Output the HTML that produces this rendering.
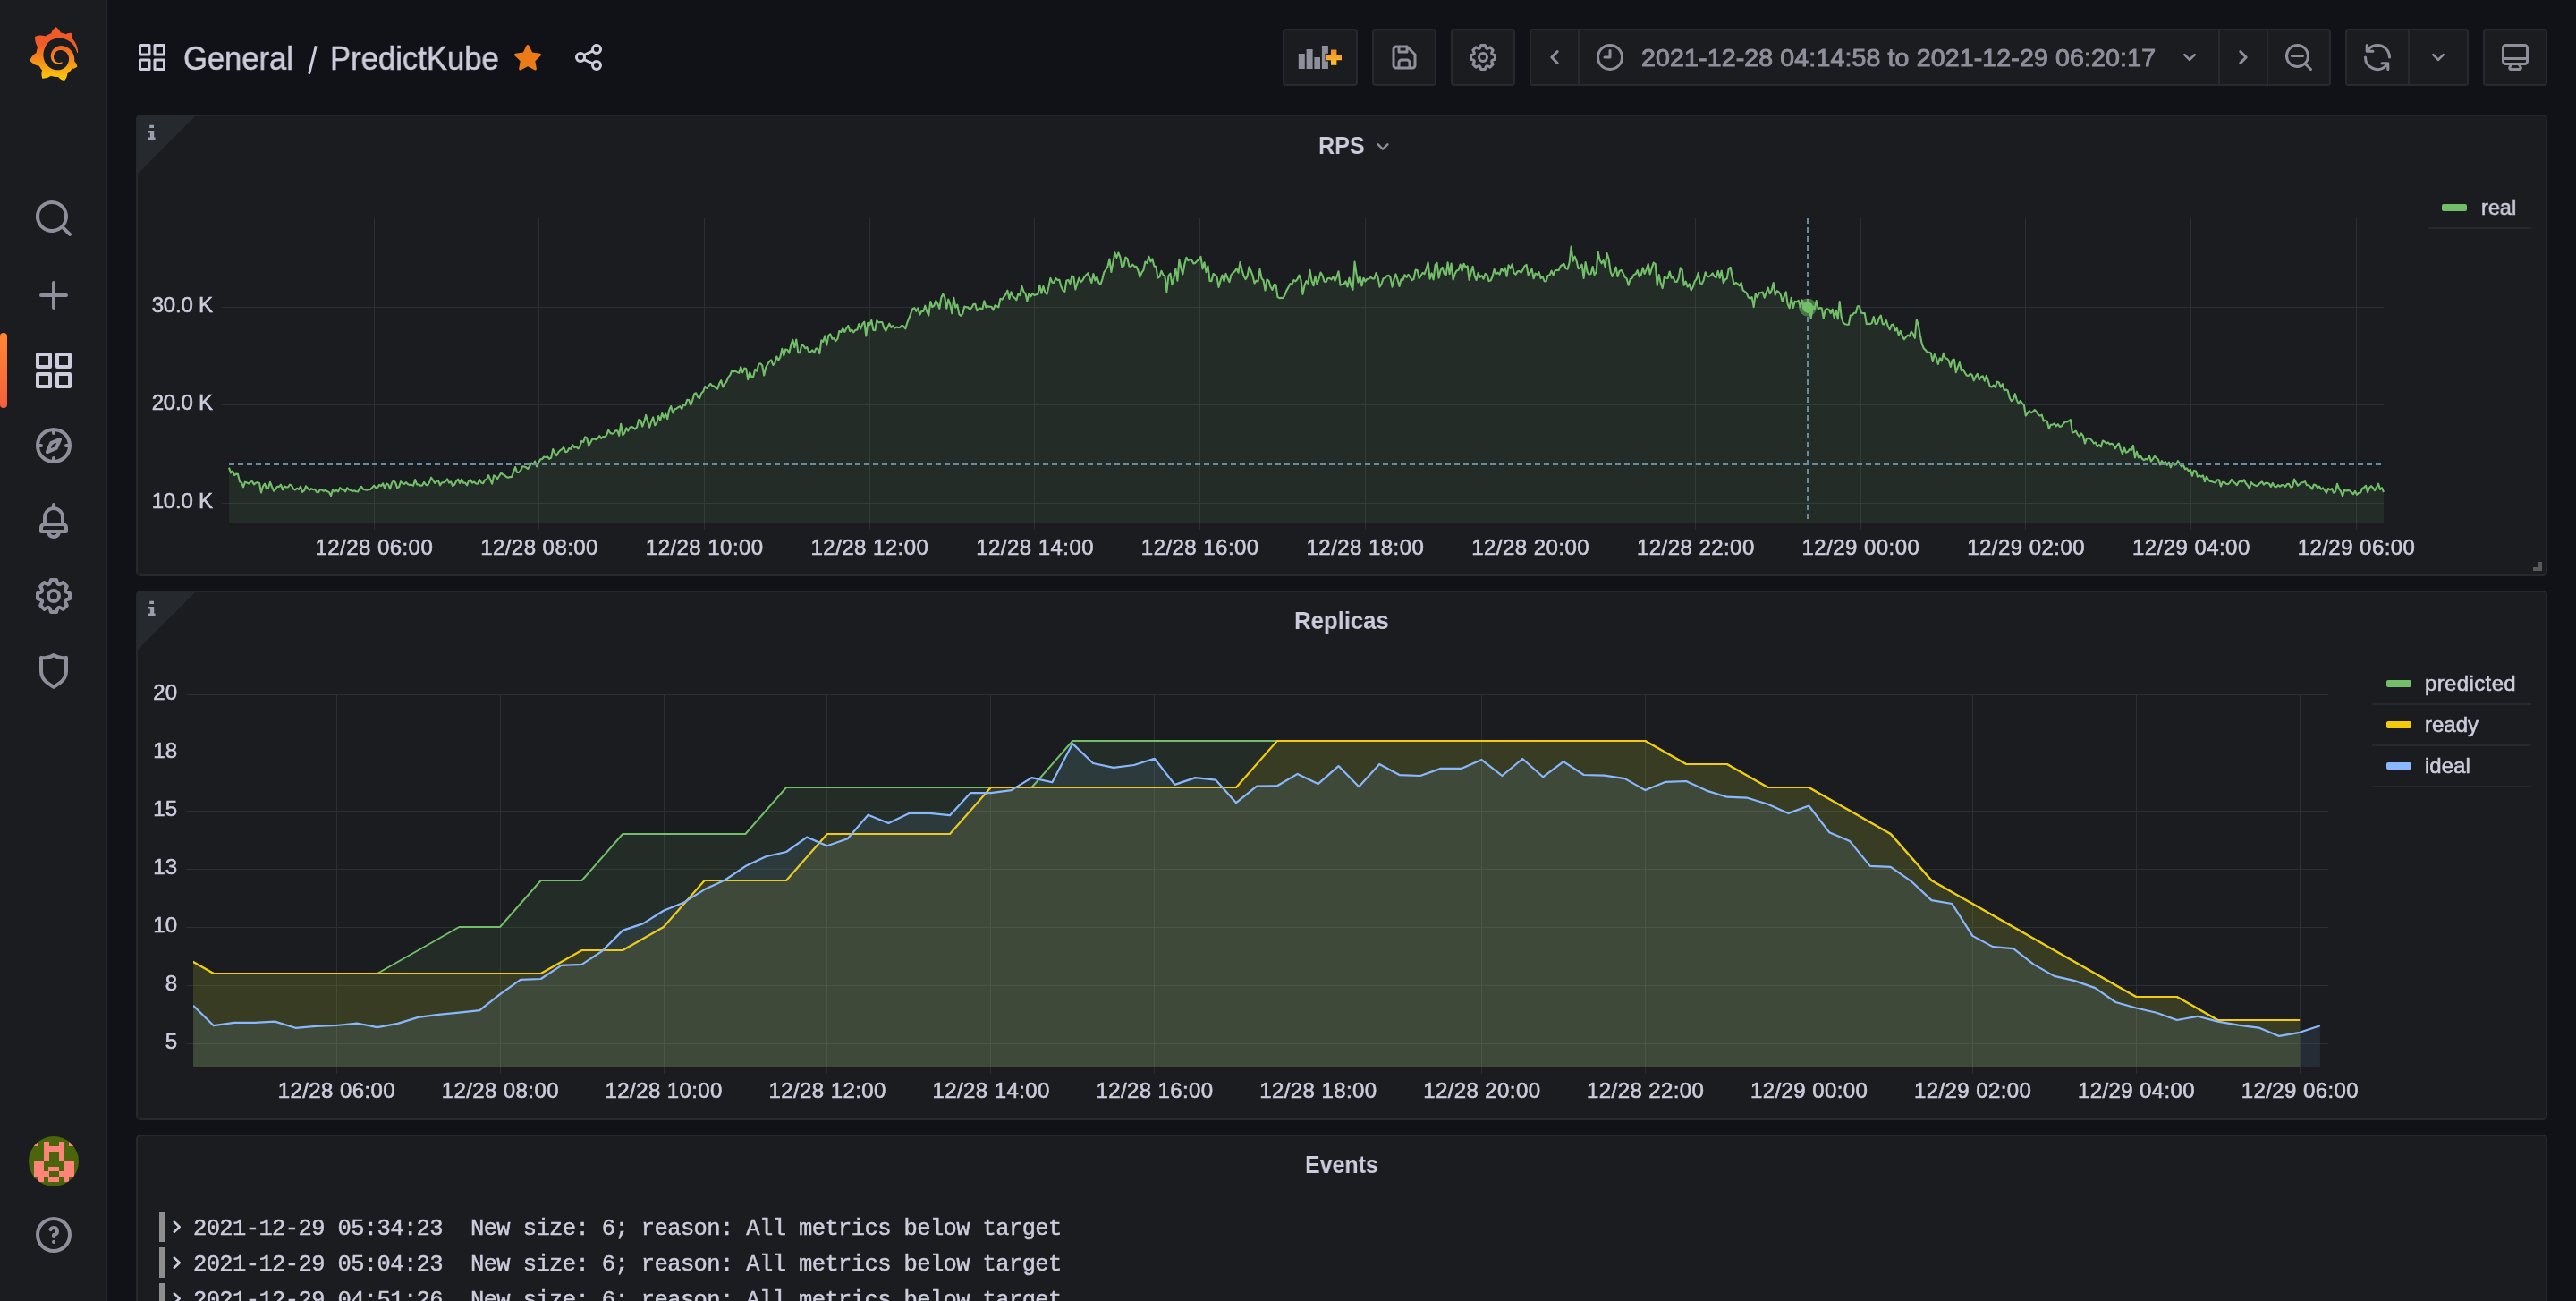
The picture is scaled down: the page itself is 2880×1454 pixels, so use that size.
<!DOCTYPE html>
<html lang="en"><head><meta charset="utf-8"><title>PredictKube - Grafana</title>
<style>
html,body{margin:0;padding:0;background:#111217;}
body{width:2880px;height:1454px;overflow:hidden;position:relative;font-family:"Liberation Sans",sans-serif;color:#ccccdc;}
.t{position:absolute;white-space:pre;margin:0;padding:0;will-change:transform;}
.ic{position:absolute;display:block;will-change:transform;}
.abs{position:absolute;}
.mono{font-family:"Liberation Mono",monospace;}
.side{position:absolute;left:0;top:0;width:118px;height:1454px;background:#1a1c20;border-right:2px solid #26282d;}
.btn{position:absolute;top:32px;height:60px;background:#1a1c20;border:2px solid #28292f;border-radius:4px;box-sizing:content-box;}
.sep{position:absolute;top:34px;width:2px;height:60px;background:#28292f;}
.panel{position:absolute;left:152px;width:2692px;background:#1a1c20;border:2px solid #26282d;border-radius:5px;}
.corner{position:absolute;left:0;top:0;width:0;height:0;border-left:64px solid #262a2f;border-bottom:64px solid transparent;border-top-left-radius:2px;}
.lsw{position:absolute;width:28px;height:8px;border-radius:2px;}
.lsep{position:absolute;height:2px;background:#26282d;}
.bar{position:absolute;left:178px;width:6px;height:34px;background:#8e8e8e;}
</style></head><body>

<div class="side"></div>
<svg class="ic" style="left:31.6px;top:29.6px" width="56.400" height="60.3" viewBox="0 0 351 365" preserveAspectRatio="none"><defs><linearGradient id="lg" gradientUnits="userSpaceOnUse" x1="175.5" y1="445.4948" x2="175.5" y2="114.0346"><stop offset="0" stop-color="#FFF100"/><stop offset="1" stop-color="#F05A28"/></linearGradient></defs><path fill="url(#lg)" d="M342,161.2c-0.6-6.1-1.6-13.1-3.6-20.9c-2-7.7-5-16.2-9.4-25c-4.400-8.800-10.100-17.900-17.500-26.800c-2.900-3.500-6.100-6.900-9.500-10.200c5.100-20.300-6.200-37.900-6.200-37.900c-19.500-1.200-31.900,6.100-36.500,9.400c-0.800-0.300-1.500-0.700-2.300-1c-3.300-1.300-6.700-2.600-10.300-3.700c-3.500-1.100-7.100-2.100-10.800-3c-3.700-0.900-7.400-1.600-11.200-2.200c-0.700-0.100-1.300-0.200-2-0.300c-8.500-27.200-32.900-38.600-32.900-38.600c-27.300,17.300-32.400,41.500-32.400,41.500s-0.100,0.500-0.300,1.400c-1.500,0.400-3,0.900-4.500,1.300c-2.100,0.600-4.200,1.400-6.200,2.200c-2.100,0.800-4.100,1.600-6.200,2.500c-4.100,1.800-8.200,3.800-12.200,6c-3.900,2.200-7.700,4.600-11.400,7.100c-0.500-0.200-1-0.400-1-0.400c-37.800-14.400-71.300,2.900-71.300,2.900c-3.100,40.200,15.100,65.500,18.700,70.100c-0.900,2.500-1.700,5-2.500,7.500c-2.800,9.100-4.900,18.400-6.200,28.100c-0.200,1.400-0.400,2.800-0.500,4.200C18.800,192.700,8.500,228,8.500,228c29.100,33.500,63.100,35.600,63.100,35.600c0,0,0.100-0.100,0.100-0.100c4.300,7.700,9.300,15,14.900,21.900c2.400,2.900,4.800,5.600,7.400,8.300c-10.600,30.400,1.500,55.600,1.500,55.600c32.400,1.200,53.700-14.200,58.200-17.700c3.200,1.100,6.500,2.100,9.800,2.900c10,2.600,20.200,4.100,30.400,4.500c2.500,0.100,5.100,0.200,7.600,0.100l1.200,0l0.800,0l1.600,0l1.600-0.100l0,0.100c15.300,21.800,42.100,24.900,42.100,24.900c19.100-20.100,20.200-40.100,20.200-44.400l0,0c0,0,0-0.100,0-0.300c0-0.400,0-0.600,0-0.600l0,0c0-0.300,0-0.600,0-0.900c4-2.800,7.800-5.800,11.400-9.100c7.600-6.900,14.300-14.800,19.900-23.300c0.500-0.800,1-1.600,1.500-2.400c21.600,1.200,36.900-13.400,36.900-13.400c-3.600-22.500-16.400-33.500-19.100-35.600l0,0c0,0-0.100-0.100-0.300-0.200c-0.200-0.100-0.200-0.200-0.200-0.200c0,0,0,0,0,0c-0.100-0.100-0.300-0.200-0.500-0.300c0.100-1.400,0.200-2.700,0.300-4.100c0.200-2.400,0.200-4.900,0.200-7.300l0-1.800l0-0.900l0-0.500c0-0.600,0-0.400,0-0.600l-0.100-1.500l-0.100-2c0-0.700-0.100-1.300-0.200-1.900c-0.100-0.600-0.100-1.300-0.200-1.900l-0.200-1.900l-0.300-1.900c-0.400-2.500-0.800-4.900-1.400-7.400c-2.300-9.700-6.100-18.900-11-27.200c-5-8.300-11.200-15.600-18.300-21.800c-7-6.200-14.900-11.200-23.100-14.900c-8.300-3.700-16.900-6.100-25.500-7.200c-4.300-0.600-8.600-0.800-12.900-0.700l-1.600,0l-0.400,0c-0.100,0-0.600,0-0.500,0l-0.700,0l-1.600,0.100c-0.600,0-1.200,0.100-1.700,0.100c-2.200,0.200-4.400,0.500-6.500,0.900c-8.600,1.600-16.700,4.700-23.800,9c-7.100,4.300-13.300,9.600-18.300,15.600c-5,6-8.900,12.700-11.600,19.600c-2.700,6.900-4.200,14.100-4.600,21c-0.100,1.700-0.100,3.500-0.100,5.200c0,0.400,0,0.900,0,1.300l0.100,1.400c0.100,0.800,0.100,1.700,0.200,2.500c0.300,3.500,1,6.900,1.900,10.100c1.900,6.500,4.900,12.400,8.600,17.400c3.700,5,8.200,9.100,12.900,12.400c4.700,3.200,9.800,5.500,14.800,7c5,1.500,10,2.100,14.700,2.100c0.600,0,1.200,0,1.700,0c0.300,0,0.600,0,0.900,0c0.300,0,0.600,0,0.900-0.100c0.500,0,1-0.100,1.500-0.100c0.100,0,0.300,0,0.400-0.100l0.500-0.100c0.300,0,0.600-0.100,0.900-0.100c0.600-0.100,1.100-0.200,1.700-0.300c0.600-0.100,1.100-0.200,1.600-0.400c1.100-0.200,2.100-0.600,3.100-0.900c2-0.700,4-1.500,5.700-2.400c1.800-0.900,3.400-2,5-3c0.400-0.300,0.900-0.600,1.300-1c1.600-1.300,1.900-3.700,0.600-5.300c-1.100-1.400-3.100-1.800-4.700-0.900c-0.400,0.200-0.800,0.400-1.200,0.600c-1.400,0.700-2.800,1.300-4.300,1.800c-1.500,0.500-3.100,0.900-4.700,1.200c-0.800,0.100-1.600,0.200-2.500,0.300c-0.400,0-0.800,0.100-1.300,0.100c-0.400,0-0.900,0-1.200,0c-0.400,0-0.800,0-1.200,0c-0.500,0-1,0-1.500-0.100c0,0-0.300,0-0.100,0l-0.200,0l-0.300,0c-0.200,0-0.500,0-0.700-0.100c-0.500-0.100-0.900-0.100-1.400-0.200c-3.700-0.500-7.400-1.600-10.900-3.200c-3.600-1.600-7-3.800-10.100-6.600c-3.100-2.800-5.800-6.100-7.900-9.900c-2.100-3.800-3.600-8-4.300-12.400c-0.300-2.200-0.500-4.500-0.400-6.700c0-0.600,0.100-1.200,0.100-1.800c0,0.200,0-0.100,0-0.100l0-0.200l0-0.500c0-0.300,0.100-0.600,0.100-0.900c0.100-1.200,0.300-2.400,0.500-3.600c1.700-9.600,6.500-19,13.900-26.100c1.900-1.800,3.900-3.400,6-4.900c2.100-1.500,4.400-2.800,6.800-3.900c2.400-1.100,4.800-2,7.400-2.700c2.500-0.700,5.100-1.100,7.800-1.400c1.300-0.100,2.600-0.200,4-0.200c0.400,0,0.600,0,0.900,0l1.100,0l0.700,0c0.300,0,0,0,0.100,0l0.300,0l1.100,0.100c2.900,0.200,5.700,0.600,8.500,1.300c5.600,1.200,11.100,3.300,16.200,6.100c10.200,5.700,18.900,14.500,24.200,25.100c2.700,5.300,4.600,11,5.500,16.900c0.200,1.500,0.400,3,0.500,4.500l0.100,1.100l0.100,1.100c0,0.400,0,0.800,0,1.100c0,0.400,0,0.800,0,1.100l0,1l0,1.100c0,0.700-0.100,1.900-0.100,2.600c-0.100,1.600-0.300,3.300-0.500,4.900c-0.200,1.600-0.500,3.200-0.800,4.800c-0.300,1.600-0.700,3.200-1.100,4.700c-0.800,3.100-1.800,6.200-3,9.300c-2.400,6-5.600,11.800-9.400,17.100c-7.700,10.600-18.200,19.200-30.200,24.700c-6,2.700-12.300,4.700-18.800,5.700c-3.200,0.600-6.500,0.900-9.800,1l-0.600,0l-0.500,0l-1.100,0l-1.600,0l-0.800,0c0.400,0-0.100,0-0.100,0l-0.300,0c-1.800,0-3.500-0.100-5.300-0.300c-7-0.500-13.900-1.800-20.700-3.700c-6.700-1.900-13.200-4.600-19.400-7.800c-12.300-6.600-23.400-15.600-32-26.500c-4.300-5.400-8.100-11.300-11.200-17.400c-3.100-6.100-5.600-12.600-7.400-19.100c-1.800-6.600-2.900-13.300-3.400-20.100l-0.100-1.300l0-0.300l0-0.300l0-0.600l0-1.100l0-0.300l0-0.400l0-0.800l0-1.600l0-0.300c0,0,0,0.100,0-0.100l0-0.600c0-0.800,0-1.700,0-2.500c0.100-3.300,0.400-6.800,0.800-10.200c0.400-3.400,1-6.900,1.700-10.300c0.700-3.400,1.500-6.800,2.500-10.200c1.900-6.700,4.300-13.200,7.100-19.300c5.700-12.200,13.100-23.100,22-31.800c2.200-2.200,4.500-4.200,6.900-6.200c2.400-1.900,4.900-3.700,7.500-5.400c2.500-1.700,5.200-3.200,7.900-4.600c1.300-0.700,2.700-1.400,4.100-2c0.700-0.300,1.400-0.600,2.100-0.900c0.700-0.300,1.400-0.600,2.100-0.900c2.800-1.200,5.700-2.200,8.700-3.100c0.700-0.200,1.500-0.400,2.200-0.700c0.700-0.200,1.500-0.400,2.200-0.600c1.500-0.400,3-0.800,4.500-1.100c0.700-0.200,1.500-0.300,2.300-0.500c0.800-0.200,1.500-0.300,2.300-0.500c0.800-0.100,1.500-0.300,2.300-0.400l1.100-0.200l1.200-0.200c0.800-0.100,1.500-0.200,2.300-0.300c0.900-0.100,1.700-0.200,2.600-0.300c0.700-0.100,1.900-0.200,2.600-0.300c0.500-0.100,1.100-0.100,1.600-0.200l1.100-0.100l0.500-0.100l0.600,0c0.900-0.100,1.700-0.100,2.600-0.200l1.300-0.100c0,0,0.500,0,0.100,0l0.300,0l0.600,0c0.700,0,1.500-0.100,2.200-0.100c2.900-0.100,5.900-0.100,8.800,0c5.800,0.200,11.500,0.900,17,1.900c11.100,2.100,21.500,5.600,31,10.300c9.500,4.600,17.900,10.300,25.300,16.500c0.500,0.400,0.900,0.800,1.400,1.200c0.400,0.400,0.900,0.800,1.300,1.200c0.900,0.800,1.700,1.600,2.600,2.400c0.900,0.800,1.700,1.600,2.500,2.400c0.800,0.800,1.600,1.600,2.400,2.500c3.100,3.300,6,6.600,8.600,10c5.200,6.700,9.400,13.500,12.700,19.900c0.200,0.400,0.400,0.800,0.600,1.200c0.200,0.400,0.400,0.800,0.600,1.200c0.400,0.800,0.800,1.600,1.100,2.400c0.400,0.800,0.700,1.500,1.100,2.300c0.300,0.800,0.700,1.500,1,2.300c1.200,3,2.400,5.900,3.300,8.600c1.500,4.400,2.600,8.300,3.500,11.700c0.300,1.400,1.600,2.300,3,2.100c1.500-0.100,2.600-1.300,2.600-2.800C342.600,170.400,342.500,166.100,342,161.200z"/></svg>
<div class="abs" style="left:0;top:372px;width:8px;height:84px;border-radius:4px;background:linear-gradient(0deg,#f55f3e 0%,#ff8833 100%);"></div>
<svg class="ic" style="left:36.00px;top:220.00px" width="48" height="48" viewBox="0 0 24 24" fill="#8e8f9b" ><path d="M21.71,20.29,18,16.61A9,9,0,1,0,16.61,18l3.68,3.68a1,1,0,0,0,1.42,0A1,1,0,0,0,21.71,20.29ZM11,18a7,7,0,1,1,7-7A7,7,0,0,1,11,18Z"/></svg>
<svg class="ic" style="left:36.00px;top:306.00px" width="48" height="48" viewBox="0 0 24 24" fill="#8e8f9b" ><path d="M19,11H13V5a1,1,0,0,0-2,0v6H5a1,1,0,0,0,0,2h6v6a1,1,0,0,0,2,0V13h6a1,1,0,0,0,0-2Z"/></svg>
<svg class="ic" style="left:36.00px;top:390.00px" width="48" height="48" viewBox="0 0 24 24" fill="#ccccdc" ><path d="M10,13H3a1,1,0,0,0-1,1v7a1,1,0,0,0,1,1h7a1,1,0,0,0,1-1V14A1,1,0,0,0,10,13ZM9,20H4V15H9ZM21,2H14a1,1,0,0,0-1,1v7a1,1,0,0,0,1,1h7a1,1,0,0,0,1-1V3A1,1,0,0,0,21,2ZM20,9H15V4h5Zm1,4H14a1,1,0,0,0-1,1v7a1,1,0,0,0,1,1h7a1,1,0,0,0,1-1V14A1,1,0,0,0,21,13Zm-1,7H15V15h5ZM10,2H3A1,1,0,0,0,2,3v7a1,1,0,0,0,1,1h7a1,1,0,0,0,1-1V3A1,1,0,0,0,10,2ZM9,9H4V4H9Z"/></svg>
<svg class="ic" style="left:36.00px;top:474.00px" width="48" height="48" viewBox="0 0 24 24" fill="#8e8f9b" ><path d="M12,2A10,10,0,1,0,22,12,10,10,0,0,0,12,2Zm1,17.93V19a1,1,0,0,0-2,0v.93A8,8,0,0,1,4.07,13H5a1,1,0,0,0,0-2H4.07A8,8,0,0,1,11,4.07V5a1,1,0,0,0,2,0V4.07A8,8,0,0,1,19.93,11H19a1,1,0,0,0,0,2h.93A8,8,0,0,1,13,19.93ZM15.14,7.55l-5,2.12a1,1,0,0,0-.52.52l-2.12,5a1,1,0,0,0,.21,1.1,1,1,0,0,0,.7.3.93.93,0,0,0,.4-.09l5-2.12a1,1,0,0,0,.52-.52l2.12-5a1,1,0,0,0-1.31-1.31Zm-2.49,5.1-2.28,1,1-2.28,2.28-1Z"/></svg>
<svg class="ic" style="left:36.00px;top:558.00px" width="48" height="48" viewBox="0 0 24 24" fill="#8e8f9b" ><path d="M18,13.18V10a6,6,0,0,0-5-5.91V3a1,1,0,0,0-2,0V4.09A6,6,0,0,0,6,10v3.18A3,3,0,0,0,4,16v2a1,1,0,0,0,1,1H8.14a4,4,0,0,0,7.72,0H19a1,1,0,0,0,1-1V16A3,3,0,0,0,18,13.18ZM8,10a4,4,0,0,1,8,0v3H8Zm4,10a2,2,0,0,1-1.72-1h3.44A2,2,0,0,1,12,20Zm6-3H6V16a1,1,0,0,1,1-1H17a1,1,0,0,1,1,1Z"/></svg>
<svg class="ic" style="left:36.00px;top:642.00px" width="48" height="48" viewBox="0 0 24 24" fill="#8e8f9b" ><path d="M21.32,9.55l-1.89-.63.89-1.78A1,1,0,0,0,20.13,6L18,3.87a1,1,0,0,0-1.15-.19l-1.78.89-.63-1.89A1,1,0,0,0,13.5,2h-3a1,1,0,0,0-.95.68L8.920,4.57,7.14,3.68A1,1,0,0,0,6,3.87L3.87,6a1,1,0,0,0-.19,1.15l.89,1.780-1.89.63A1,1,0,0,0,2,10.5v3a1,1,0,0,0,.68.95l1.89.63-.89,1.78A1,1,0,0,0,3.87,18L6,20.13a1,1,0,0,0,1.15.19l1.78-.89.63,1.89a1,1,0,0,0,.95.68h3a1,1,0,0,0,.95-.68l.63-1.89,1.78.89A1,1,0,0,0,18,20.13L20.13,18a1,1,0,0,0,.19-1.15l-.89-1.78,1.89-.63A1,1,0,0,0,22,13.5v-3A1,1,0,0,0,21.32,9.55ZM20,12.78l-1.2.4A2,2,0,0,0,17.64,16l.57,1.14-1.1,1.1L16,17.64a2,2,0,0,0-2.79,1.16l-.4,1.2H11.220l-.4-1.2A2,2,0,0,0,8,17.64l-1.14.57-1.1-1.1L6.36,16A2,2,0,0,0,5.2,13.18L4,12.78V11.220l1.2-.4A2,2,0,0,0,6.36,8L5.79,6.89l1.1-1.1L8,6.36A2,2,0,0,0,10.82,5.2l.4-1.2h1.56l.4,1.2A2,2,0,0,0,16,6.36l1.140-.57,1.1,1.1L17.64,8a2,2,0,0,0,1.16,2.79l1.2.4ZM12,8a4,4,0,1,0,4,4A4,4,0,0,0,12,8Zm0,6a2,2,0,1,1,2-2A2,2,0,0,1,12,14Z"/></svg>
<svg class="ic" style="left:36.00px;top:726.00px" width="48" height="48" viewBox="0 0 24 24" fill="#8e8f9b" ><path d="M19.63,3.65a1,1,0,0,0-.84-.2,8,8,0,0,1-6.22-1.27,1,1,0,0,0-1.14,0A8,8,0,0,1,5.21,3.45a1,1,0,0,0-.84.2A1,1,0,0,0,4,4.43v7.45a9,9,0,0,0,3.77,7.33l3.65,2.6a1,1,0,0,0,1.16,0l3.65-2.6A9,9,0,0,0,20,11.88V4.43A1,1,0,0,0,19.63,3.65ZM18,11.88a7,7,0,0,1-2.930,5.7L12,19.77,8.930,17.58A7,7,0,0,1,6,11.88V5.58a10,10,0,0,0,6-1.39,10,10,0,0,0,6,1.39Z"/></svg>
<svg class="ic" style="left:36.00px;top:1356.00px" width="48" height="48" viewBox="0 0 24 24" fill="#8e8f9b" ><path d="M11.29,15.29a1.58,1.58,0,0,0-.12.15.76.76,0,0,0-.09.18.64.64,0,0,0-.06.18,1.36,1.36,0,0,0,0,.2.84.84,0,0,0,.08.38.9.9,0,0,0,.54.54.94.94,0,0,0,.76,0,.9.9,0,0,0,.54-.54A1,1,0,0,0,13,16a1,1,0,0,0-.29-.71A1,1,0,0,0,11.29,15.29ZM12,2A10,10,0,1,0,22,12,10,10,0,0,0,12,2Zm0,18a8,8,0,1,1,8-8A8,8,0,0,1,12,20ZM12,7A3,3,0,0,0,9.4,8.5a1,1,0,1,0,1.73,1A1,1,0,0,1,12,9a1,1,0,0,1,0,2,1,1,0,0,0-1,1v1a1,1,0,0,0,2,0v-.18A3,3,0,0,0,12,7Z"/></svg>
<svg class="ic" style="left:32px;top:1270px" width="56" height="56" viewBox="0 0 10 10"><defs><clipPath id="avc"><circle cx="5" cy="5" r="5"/></clipPath></defs><g clip-path="url(#avc)" shape-rendering="crispEdges"><rect width="10" height="10" fill="#4a650b"/><rect x="1" y="1" width="1.02" height="1.02" fill="#fe8378"/><rect x="3" y="1" width="1.02" height="1.02" fill="#fe8378"/><rect x="6" y="1" width="1.02" height="1.02" fill="#fe8378"/><rect x="8" y="1" width="1.02" height="1.02" fill="#fe8378"/><rect x="3" y="2" width="1.02" height="1.02" fill="#fe8378"/><rect x="4" y="2" width="1.02" height="1.02" fill="#fe8378"/><rect x="5" y="2" width="1.02" height="1.02" fill="#fe8378"/><rect x="6" y="2" width="1.02" height="1.02" fill="#fe8378"/><rect x="3" y="3" width="1.02" height="1.02" fill="#fe8378"/><rect x="6" y="3" width="1.02" height="1.02" fill="#fe8378"/><rect x="3" y="4" width="1.02" height="1.02" fill="#fe8378"/><rect x="6" y="4" width="1.02" height="1.02" fill="#fe8378"/><rect x="1" y="5" width="1.02" height="1.02" fill="#fe8378"/><rect x="2" y="5" width="1.02" height="1.02" fill="#fe8378"/><rect x="7" y="5" width="1.02" height="1.02" fill="#fe8378"/><rect x="8" y="5" width="1.02" height="1.02" fill="#fe8378"/><rect x="1" y="6" width="1.02" height="1.02" fill="#fe8378"/><rect x="2" y="6" width="1.02" height="1.02" fill="#fe8378"/><rect x="4" y="6" width="1.02" height="1.02" fill="#fe8378"/><rect x="5" y="6" width="1.02" height="1.02" fill="#fe8378"/><rect x="7" y="6" width="1.02" height="1.02" fill="#fe8378"/><rect x="8" y="6" width="1.02" height="1.02" fill="#fe8378"/><rect x="1" y="7" width="1.02" height="1.02" fill="#fe8378"/><rect x="2" y="7" width="1.02" height="1.02" fill="#fe8378"/><rect x="3" y="7" width="1.02" height="1.02" fill="#fe8378"/><rect x="6" y="7" width="1.02" height="1.02" fill="#fe8378"/><rect x="7" y="7" width="1.02" height="1.02" fill="#fe8378"/><rect x="8" y="7" width="1.02" height="1.02" fill="#fe8378"/><rect x="2" y="8" width="1.02" height="1.02" fill="#fe8378"/><rect x="4" y="8" width="1.02" height="1.02" fill="#fe8378"/><rect x="5" y="8" width="1.02" height="1.02" fill="#fe8378"/><rect x="7" y="8" width="1.02" height="1.02" fill="#fe8378"/></g></svg>
<svg class="ic" style="left:152.00px;top:46.00px" width="36" height="36" viewBox="0 0 24 24" fill="#ccccdc" ><path d="M10,13H3a1,1,0,0,0-1,1v7a1,1,0,0,0,1,1h7a1,1,0,0,0,1-1V14A1,1,0,0,0,10,13ZM9,20H4V15H9ZM21,2H14a1,1,0,0,0-1,1v7a1,1,0,0,0,1,1h7a1,1,0,0,0,1-1V3A1,1,0,0,0,21,2ZM20,9H15V4h5Zm1,4H14a1,1,0,0,0-1,1v7a1,1,0,0,0,1,1h7a1,1,0,0,0,1-1V14A1,1,0,0,0,21,13Zm-1,7H15V15h5ZM10,2H3A1,1,0,0,0,2,3v7a1,1,0,0,0,1,1h7a1,1,0,0,0,1-1V3A1,1,0,0,0,10,2ZM9,9H4V4H9Z"/></svg>
<div class="t " style="left:204.80px;top:47.83px;font-size:36px;line-height:36px;color:#ccccdc;transform:scaleX(0.9603);transform-origin:0 0;-webkit-text-stroke:0.5px #ccccdc;">General</div>
<svg class="ic" style="left:340px;top:46px" width="20" height="42" viewBox="340 46 20 42"><path d="M345.600 82.600L353.300 51.400" stroke="#ccccdc" stroke-width="2.900" fill="none"/></svg>
<div class="t " style="left:368.60px;top:47.83px;font-size:36px;line-height:36px;color:#ccccdc;transform:scaleX(0.9626);transform-origin:0 0;-webkit-text-stroke:0.5px #ccccdc;">PredictKube</div>
<svg class="ic" style="left:572.00px;top:46.50px" width="36" height="36" viewBox="0 0 24 24" fill="#eb7b18" ><path d="M17.56,21a1,1,0,0,1-.46-.11L12,18.22l-5.1,2.670a1,1,0,0,1-1.450-1.060l1-5.630-4.120-4a1,1,0,0,1-.250-1,1,1,0,0,1,.810-.680l5.700-.830,2.510-5.130a1,1,0,0,1,1.800,0l2.540,5.120,5.700.830a1,1,0,0,1,.810.680,1,1,0,0,1-.250,1l-4.120,4,1,5.630a1,1,0,0,1-.4,1A1,1,0,0,1,17.560,21Z"/></svg>
<svg class="ic" style="left:640.00px;top:46.00px" width="36" height="36" viewBox="0 0 24 24" fill="#ccccdc" ><path d="M18,14a4,4,0,0,0-3.080,1.480l-5.100-2.350a3.640,3.640,0,0,0,0-2.260l5.100-2.350A4,4,0,1,0,14,6a4.170,4.170,0,0,0,.070.710L8.790,9.140a4,4,0,1,0,0,5.720l5.280,2.430A4.170,4.170,0,0,0,14,18a4,4,0,1,0,4-4ZM18,4a2,2,0,1,1-2,2A2,2,0,0,1,18,4ZM6,14a2,2,0,1,1,2-2A2,2,0,0,1,6,14Zm12,6a2,2,0,1,1,2-2A2,2,0,0,1,18,20Z"/></svg>
<div class="btn" style="left:1434px;width:80px"></div>
<div class="btn" style="left:1534px;width:68px"></div>
<div class="btn" style="left:1622px;width:68px"></div>
<div class="btn" style="left:1710px;width:892px"></div>
<div class="btn" style="left:2622px;width:134px"></div>
<div class="btn" style="left:2776px;width:68px"></div>
<div class="sep" style="left:1764px"></div>
<div class="sep" style="left:2480px"></div>
<div class="sep" style="left:2534px"></div>
<div class="sep" style="left:2692px"></div>
<svg class="ic" style="left:1450px;top:48px" width="52" height="32" viewBox="1450 48 52 32"><defs><linearGradient id="pg" x1="0" y1="0" x2="0" y2="1"><stop offset="0" stop-color="#f0882d"/><stop offset="1" stop-color="#fdc52b"/></linearGradient></defs>
<g fill="#8e8f9b"><rect x="1451.8" y="60" width="7" height="17"/><rect x="1460.6" y="55" width="7" height="22"/><rect x="1469.4" y="64" width="6.6" height="13"/><rect x="1477.9" y="51" width="7" height="26"/></g>
<path d="M1488 55.4h6.4v5.5h5.6v6.4h-5.6v5.5h-6.4v-5.5h-5.4v-6.400h5.400z" fill="url(#pg)" stroke="#1a1c20" stroke-width="2.2" paint-order="stroke"/></svg>
<svg class="ic" style="left:1552.00px;top:46.00px" width="36" height="36" viewBox="0 0 24 24" fill="#8e8f9b" ><path d="M20.71,9.29l-6-6a1,1,0,0,0-.32-.21A1.090,1.090,0,0,0,14,3H6A3,3,0,0,0,3,6V18a3,3,0,0,0,3,3H18a3,3,0,0,0,3-3V10A1,1,0,0,0,20.710,9.290ZM9,5h4V7H9Zm6,14H9V16a1,1,0,0,1,1-1h4a1,1,0,0,1,1,1Zm4-1a1,1,0,0,1-1,1H17V16a3,3,0,0,0-3-3H10a3,3,0,0,0-3,3v3H6a1,1,0,0,1-1-1V6A1,1,0,0,1,6,5H7V8A1,1,0,0,0,8,9h6a1,1,0,0,0,1-1V6.410l4,4Z"/></svg>
<svg class="ic" style="left:1640.00px;top:46.00px" width="36" height="36" viewBox="0 0 24 24" fill="#8e8f9b" ><path d="M21.32,9.55l-1.89-.63.89-1.78A1,1,0,0,0,20.13,6L18,3.87a1,1,0,0,0-1.15-.19l-1.78.89-.63-1.89A1,1,0,0,0,13.5,2h-3a1,1,0,0,0-.95.68L8.920,4.57,7.14,3.68A1,1,0,0,0,6,3.87L3.87,6a1,1,0,0,0-.19,1.15l.89,1.780-1.89.63A1,1,0,0,0,2,10.5v3a1,1,0,0,0,.68.95l1.89.63-.89,1.78A1,1,0,0,0,3.87,18L6,20.13a1,1,0,0,0,1.15.19l1.78-.89.63,1.89a1,1,0,0,0,.95.68h3a1,1,0,0,0,.95-.68l.63-1.89,1.78.89A1,1,0,0,0,18,20.13L20.13,18a1,1,0,0,0,.19-1.15l-.89-1.78,1.89-.63A1,1,0,0,0,22,13.5v-3A1,1,0,0,0,21.32,9.55ZM20,12.78l-1.2.4A2,2,0,0,0,17.64,16l.57,1.14-1.1,1.1L16,17.64a2,2,0,0,0-2.79,1.16l-.4,1.2H11.220l-.4-1.2A2,2,0,0,0,8,17.64l-1.14.57-1.1-1.1L6.36,16A2,2,0,0,0,5.2,13.18L4,12.78V11.220l1.2-.4A2,2,0,0,0,6.36,8L5.79,6.89l1.1-1.1L8,6.36A2,2,0,0,0,10.82,5.2l.4-1.2h1.56l.4,1.2A2,2,0,0,0,16,6.36l1.140-.57,1.1,1.1L17.64,8a2,2,0,0,0,1.16,2.79l1.2.4ZM12,8a4,4,0,1,0,4,4A4,4,0,0,0,12,8Zm0,6a2,2,0,1,1,2-2A2,2,0,0,1,12,14Z"/></svg>
<svg class="ic" style="left:1720.00px;top:46.00px" width="36" height="36" viewBox="0 0 24 24" fill="#8e8f9b" ><path d="M11.29,12l3.54-3.54a1,1,0,0,0,0-1.41,1,1,0,0,0-1.42,0L9.170,11.29a1,1,0,0,0,0,1.42L13.41,17a1,1,0,0,0,.71.29,1,1,0,0,0,.71-.29,1,1,0,0,0,0-1.41Z"/></svg>
<svg class="ic" style="left:1782.00px;top:46.00px" width="36" height="36" viewBox="0 0 24 24" fill="#8e8f9b" ><path d="M12,2A10,10,0,1,0,22,12,10,10,0,0,0,12,2Zm0,18a8,8,0,1,1,8-8A8,8,0,0,1,12,20Zm0-14a1,1,0,0,0-1,1v4H8a1,1,0,0,0,0,2h4a1,1,0,0,0,1-1V7A1,1,0,0,0,12,6Z"/></svg>
<div class="t " style="left:1835.00px;top:49.77px;font-size:28.5px;line-height:28.5px;color:#8e8f9b;letter-spacing:0.149px;-webkit-text-stroke:1.0px #8e8f9b;">2021-12-28 04:14:58 to 2021-12-29 06:20:17</div>
<svg class="ic" style="left:2432.00px;top:48.00px" width="32" height="32" viewBox="0 0 24 24" fill="#8e8f9b" ><path d="M17,9.17a1,1,0,0,0-1.41,0L12,12.71,8.460,9.17a1,1,0,0,0-1.41,0,1,1,0,0,0,0,1.42l4.24,4.24a1,1,0,0,0,1.42,0L17,10.59A1,1,0,0,0,17,9.17Z"/></svg>
<svg class="ic" style="left:2490.00px;top:46.00px" width="36" height="36" viewBox="0 0 24 24" fill="#8e8f9b" ><path d="M14.83,11.29,10.59,7.05a1,1,0,0,0-1.42,0,1,1,0,0,0,0,1.41L12.71,12,9.170,15.54a1,1,0,0,0,0,1.41,1,1,0,0,0,.71.29,1,1,0,0,0,.71-.29l4.24-4.24A1,1,0,0,0,14.830,11.29Z"/></svg>
<svg class="ic" style="left:2552.00px;top:46.00px" width="36" height="36" viewBox="0 0 24 24" fill="#8e8f9b" ><path d="M21.71,20.29,18,16.61A9,9,0,1,0,16.610,18l3.680,3.680a1,1,0,0,0,1.420,0A1,1,0,0,0,21.710,20.290ZM11,18a7,7,0,1,1,7-7A7,7,0,0,1,11,18Zm4-8H7a1,1,0,0,0,0,2h8a1,1,0,0,0,0-2Z"/></svg>
<svg class="ic" style="left:2640.00px;top:46.00px" width="36" height="36" viewBox="0 0 24 24" fill="#8e8f9b" ><path d="M19.91,15.51H15.380a1,1,0,0,0,0,2h2.400A8,8,0,0,1,4,12a1,1,0,0,0-2,0,10,10,0,0,0,16.880,7.230V21a1,1,0,0,0,2,0V16.500A1,1,0,0,0,19.910,15.510ZM12,2A10,10,0,0,0,5.120,4.770V3a1,1,0,0,0-2,0V7.500a1,1,0,0,0,1,1h4.500a1,1,0,0,0,0-2H6.220A8,8,0,0,1,20,12a1,1,0,0,0,2,0A10,10,0,0,0,12,2Z"/></svg>
<svg class="ic" style="left:2710.00px;top:48.00px" width="32" height="32" viewBox="0 0 24 24" fill="#8e8f9b" ><path d="M17,9.17a1,1,0,0,0-1.41,0L12,12.71,8.460,9.17a1,1,0,0,0-1.41,0,1,1,0,0,0,0,1.42l4.24,4.24a1,1,0,0,0,1.42,0L17,10.59A1,1,0,0,0,17,9.17Z"/></svg>
<svg class="ic" style="left:2794.00px;top:46.00px" width="36" height="36" viewBox="0 0 24 24" fill="#8e8f9b" ><path d="M19,2H5A3,3,0,0,0,2,5V15a3,3,0,0,0,3,3H7.640l-.580,1a2,2,0,0,0,0,2,2,2,0,0,0,1.750,1h6.460A2,2,0,0,0,17,21a2,2,0,0,0,0-2l-.590-1H19a3,3,0,0,0,3-3V5A3,3,0,0,0,19,2ZM8.770,20,10,18H14l1.200,2ZM20,15a1,1,0,0,1-1,1H5a1,1,0,0,1-1-1V14H20Zm0-3H4V5A1,1,0,0,1,5,4H19a1,1,0,0,1,1,1Z"/></svg>
<div class="panel" style="top:128px;height:512px"><div class="corner"></div><svg class="ic" style="left:12px;top:8.800px" width="10" height="18" viewBox="0 0 10 18"><path fill="#9d9eab" d="M1.200 0.800h4.800v3.200h-4.800zM0 6.900h6.200v7.700h1.400v2.600h-7.600v-2.600h1.900v-5.200h-1.900z"/></svg></div>
<div class="abs" style="left:2832px;top:628px;width:6px;height:6px;border-right:4px solid #5a5a5a;border-bottom:4px solid #5a5a5a;"></div>
<div class="t " style="left:1474.20px;top:148.70px;font-size:28px;line-height:28px;color:#ccccdc;transform:scaleX(0.8962);transform-origin:0 0;font-weight:700;">RPS</div>
<svg class="ic" style="left:1531.00px;top:149.00px" width="30" height="30" viewBox="0 0 24 24" fill="#8e8f9b" ><path d="M17,9.17a1,1,0,0,0-1.41,0L12,12.71,8.460,9.17a1,1,0,0,0-1.41,0,1,1,0,0,0,0,1.42l4.24,4.24a1,1,0,0,0,1.42,0L17,10.59A1,1,0,0,0,17,9.17Z"/></svg>
<svg class="ic" style="left:152px;top:128px" width="2696" height="516" viewBox="152 128 2696 516" font-family="Liberation Sans, sans-serif"><g fill="#2b2f33" shape-rendering="crispEdges"><rect x="418" y="244" width="1" height="348"/><rect x="602" y="244" width="1" height="348"/><rect x="787" y="244" width="1" height="348"/><rect x="972" y="244" width="1" height="348"/><rect x="1156" y="244" width="1" height="348"/><rect x="1341" y="244" width="1" height="348"/><rect x="1526" y="244" width="1" height="348"/><rect x="1710" y="244" width="1" height="348"/><rect x="1895" y="244" width="1" height="348"/><rect x="2080" y="244" width="1" height="348"/><rect x="2264" y="244" width="1" height="348"/><rect x="2449" y="244" width="1" height="348"/><rect x="2634" y="244" width="1" height="348"/><rect x="248" y="343" width="2417" height="1"/><rect x="248" y="452" width="2417" height="1"/><rect x="248" y="562" width="2417" height="1"/></g><path d="M256.0,522.7 L258.0,528.4 L260.0,526.5 L262.0,531.1 L264.0,529.6 L266.0,529.9 L268.0,538.2 L270.0,539.2 L272.0,544.3 L274.0,538.7 L276.0,539.4 L278.0,540.5 L280.0,538.6 L282.0,538.1 L284.0,541.4 L286.0,539.7 L288.0,539.1 L290.0,539.9 L292.0,550.4 L294.0,543.5 L296.0,540.7 L298.0,546.3 L300.0,545.5 L302.0,538.8 L304.0,544.0 L306.0,548.7 L308.0,546.9 L310.0,543.8 L312.0,543.9 L314.0,541.7 L316.0,547.4 L318.0,543.5 L320.0,544.5 L322.0,544.5 L324.0,541.6 L326.0,542.6 L328.0,546.4 L330.0,547.5 L332.0,545.7 L334.0,546.9 L336.0,543.7 L338.0,549.8 L340.0,548.4 L342.0,543.3 L344.0,545.7 L346.0,547.7 L348.0,546.1 L350.0,547.2 L352.0,546.7 L354.0,550.0 L356.0,550.2 L358.0,546.9 L360.0,547.7 L362.0,548.7 L364.0,547.8 L366.0,549.3 L368.0,550.1 L370.0,554.1 L372.0,547.2 L374.0,549.5 L376.0,547.8 L378.1,549.3 L380.1,545.1 L382.1,547.1 L384.1,546.7 L386.1,549.5 L388.1,545.3 L390.1,547.3 L392.1,547.9 L394.1,549.0 L396.1,548.3 L398.1,549.2 L400.1,549.5 L402.1,545.7 L404.1,543.8 L406.1,547.0 L408.1,547.3 L410.1,547.7 L412.1,547.1 L414.1,546.9 L416.1,544.9 L418.1,542.7 L420.1,545.0 L422.1,545.0 L424.1,541.9 L426.1,543.1 L428.1,540.4 L430.1,545.7 L432.1,540.5 L434.1,541.6 L436.1,546.3 L438.1,539.7 L440.1,537.2 L442.1,539.4 L444.1,545.4 L446.1,544.2 L448.1,538.2 L450.1,540.1 L452.1,541.0 L454.1,539.1 L456.1,541.3 L458.1,541.9 L460.1,541.9 L462.1,542.7 L464.1,536.1 L466.1,541.5 L468.1,541.3 L470.1,542.8 L472.1,542.4 L474.1,538.8 L476.1,541.7 L478.1,542.6 L480.1,539.0 L482.1,533.7 L484.1,536.8 L486.1,540.0 L488.1,537.9 L490.1,537.5 L492.1,542.3 L494.1,539.2 L496.1,539.3 L498.1,537.9 L500.1,535.3 L502.1,539.6 L504.1,538.3 L506.1,543.1 L508.1,541.7 L510.1,537.7 L512.1,535.7 L514.1,540.0 L516.1,535.6 L518.1,539.8 L520.1,539.6 L522.1,542.3 L524.1,537.2 L526.1,536.4 L528.1,539.6 L530.1,538.5 L532.1,540.5 L534.1,540.7 L536.1,536.0 L538.1,539.5 L540.1,540.2 L542.1,536.4 L544.1,535.4 L546.1,531.1 L548.1,535.9 L550.1,540.7 L552.1,531.4 L554.1,532.7 L556.1,535.2 L558.1,532.0 L560.1,528.7 L562.1,530.0 L564.1,531.1 L566.1,533.0 L568.1,533.8 L570.1,533.1 L572.1,533.0 L574.1,527.4 L576.1,522.0 L578.1,528.0 L580.1,527.9 L582.1,525.7 L584.1,521.3 L586.1,521.5 L588.1,522.2 L590.1,524.1 L592.1,521.2 L594.1,517.6 L596.1,519.2 L598.1,515.5 L600.1,521.4 L602.1,517.5 L604.1,513.2 L606.1,513.1 L608.1,510.5 L610.1,511.0 L612.1,510.4 L614.1,512.9 L616.1,511.7 L618.2,502.0 L620.2,506.4 L622.2,509.2 L624.2,505.5 L626.2,503.4 L628.2,502.1 L630.2,499.8 L632.2,505.1 L634.2,504.7 L636.2,501.1 L638.2,501.8 L640.2,497.2 L642.2,500.1 L644.2,499.2 L646.2,501.4 L648.2,499.6 L650.2,492.8 L652.2,493.9 L654.2,488.3 L656.2,489.5 L658.2,498.4 L660.2,494.4 L662.2,490.7 L664.2,490.4 L666.2,491.3 L668.2,490.0 L670.2,487.2 L672.2,489.9 L674.2,488.0 L676.2,488.4 L678.2,486.1 L680.2,480.6 L682.2,483.8 L684.2,484.7 L686.2,484.2 L688.2,481.4 L690.2,481.2 L692.2,486.8 L694.2,473.7 L696.2,486.3 L698.2,484.0 L700.2,478.3 L702.2,481.6 L704.2,478.0 L706.2,476.9 L708.2,478.0 L710.2,479.6 L712.2,477.0 L714.2,469.1 L716.2,470.0 L718.2,476.7 L720.2,471.2 L722.2,463.9 L724.2,471.4 L726.2,477.6 L728.2,471.0 L730.2,466.4 L732.2,475.2 L734.2,473.3 L736.2,465.1 L738.2,469.9 L740.2,462.0 L742.2,466.5 L744.2,462.5 L746.2,468.2 L748.2,458.1 L750.2,454.0 L752.2,461.5 L754.2,457.3 L756.2,456.7 L758.2,455.1 L760.2,454.1 L762.2,457.0 L764.2,452.2 L766.2,452.9 L768.2,446.7 L770.2,447.1 L772.2,452.6 L774.2,447.3 L776.2,440.3 L778.2,439.3 L780.2,443.9 L782.2,445.0 L784.2,439.6 L786.2,437.6 L788.2,432.0 L790.2,434.0 L792.2,431.5 L794.2,428.8 L796.2,431.1 L798.2,431.4 L800.2,433.5 L802.2,434.7 L804.2,428.6 L806.2,425.2 L808.2,432.4 L810.2,429.0 L812.2,426.5 L814.2,421.6 L816.2,419.4 L818.2,414.3 L820.2,415.2 L822.2,414.8 L824.2,415.9 L826.2,416.9 L828.2,410.1 L830.2,416.3 L832.2,411.6 L834.2,412.1 L836.2,424.1 L838.2,416.2 L840.2,421.1 L842.2,421.0 L844.2,412.7 L846.2,414.7 L848.2,406.9 L850.2,406.2 L852.2,408.4 L854.2,419.5 L856.2,410.8 L858.2,407.1 L860.3,403.8 L862.3,402.4 L864.3,408.0 L866.3,406.1 L868.3,398.4 L870.3,402.8 L872.3,399.2 L874.3,389.9 L876.3,397.4 L878.3,390.4 L880.3,390.9 L882.3,394.6 L884.3,385.7 L886.3,379.8 L888.3,388.2 L890.3,379.6 L892.3,394.1 L894.3,394.2 L896.3,385.2 L898.3,386.4 L900.3,389.2 L902.3,388.2 L904.3,393.3 L906.3,393.3 L908.3,391.3 L910.3,394.2 L912.3,389.5 L914.3,389.6 L916.3,395.2 L918.3,380.3 L920.3,381.8 L922.3,375.4 L924.3,385.7 L926.3,375.0 L928.3,373.4 L930.3,378.7 L932.3,378.1 L934.3,381.1 L936.3,378.9 L938.3,370.0 L940.3,371.0 L942.3,367.0 L944.3,370.9 L946.3,367.1 L948.3,364.0 L950.3,370.1 L952.3,368.6 L954.3,371.3 L956.3,368.8 L958.3,368.8 L960.3,362.0 L962.3,367.4 L964.3,362.0 L966.3,359.7 L968.3,375.5 L970.3,360.8 L972.3,363.1 L974.3,358.0 L976.3,368.8 L978.3,369.3 L980.3,358.1 L982.3,360.4 L984.3,360.0 L986.3,360.0 L988.3,366.4 L990.3,369.8 L992.3,365.7 L994.3,361.6 L996.3,365.9 L998.3,364.1 L1000.3,366.6 L1002.3,365.6 L1004.3,366.1 L1006.3,365.7 L1008.3,363.8 L1010.3,364.7 L1012.3,367.5 L1014.3,360.6 L1016.3,355.6 L1018.3,350.5 L1020.3,345.2 L1022.3,344.2 L1024.3,347.8 L1026.3,344.3 L1028.3,351.7 L1030.3,347.9 L1032.3,348.0 L1034.3,341.7 L1036.3,348.4 L1038.3,352.5 L1040.3,337.1 L1042.3,343.2 L1044.3,341.7 L1046.3,336.1 L1048.3,339.4 L1050.3,344.8 L1052.3,332.7 L1054.3,328.7 L1056.3,332.4 L1058.3,344.7 L1060.3,334.6 L1062.3,340.3 L1064.3,350.2 L1066.3,332.7 L1068.3,343.6 L1070.3,340.6 L1072.3,351.1 L1074.3,352.9 L1076.3,350.6 L1078.3,342.5 L1080.3,343.4 L1082.3,343.4 L1084.3,346.0 L1086.3,343.9 L1088.3,340.1 L1090.3,339.7 L1092.3,347.3 L1094.3,345.1 L1096.3,344.6 L1098.3,345.8 L1100.4,336.2 L1102.4,343.4 L1104.4,342.4 L1106.4,342.6 L1108.4,342.7 L1110.4,346.5 L1112.4,341.3 L1114.4,342.1 L1116.4,343.3 L1118.4,333.8 L1120.4,334.6 L1122.4,331.5 L1124.4,329.0 L1126.4,324.6 L1128.4,333.9 L1130.4,326.2 L1132.4,331.5 L1134.4,332.9 L1136.4,335.3 L1138.4,328.3 L1140.4,330.1 L1142.4,319.8 L1144.4,325.9 L1146.4,328.0 L1148.4,336.5 L1150.4,328.0 L1152.4,331.4 L1154.4,327.8 L1156.4,330.1 L1158.4,329.2 L1160.4,328.7 L1162.4,318.7 L1164.4,327.7 L1166.4,320.1 L1168.4,326.8 L1170.4,328.9 L1172.4,320.5 L1174.4,310.9 L1176.4,315.6 L1178.4,316.0 L1180.4,311.0 L1182.4,312.9 L1184.4,312.8 L1186.4,320.4 L1188.4,324.5 L1190.4,325.9 L1192.4,313.4 L1194.4,312.9 L1196.4,317.0 L1198.4,308.2 L1200.4,309.9 L1202.4,323.5 L1204.4,316.7 L1206.4,310.6 L1208.4,315.2 L1210.4,313.3 L1212.4,309.6 L1214.4,307.2 L1216.4,305.1 L1218.4,311.0 L1220.4,316.1 L1222.4,306.1 L1224.4,313.4 L1226.4,309.6 L1228.4,315.9 L1230.4,317.8 L1232.4,312.1 L1234.4,304.0 L1236.4,301.3 L1238.4,298.0 L1240.4,289.6 L1242.4,304.0 L1244.4,293.4 L1246.4,282.4 L1248.4,288.0 L1250.4,282.4 L1252.4,287.4 L1254.4,298.8 L1256.4,297.0 L1258.4,287.5 L1260.4,289.0 L1262.4,297.4 L1264.4,297.9 L1266.4,295.6 L1268.4,297.9 L1270.4,297.8 L1272.4,302.3 L1274.4,309.7 L1276.4,304.7 L1278.4,301.8 L1280.4,292.5 L1282.4,294.0 L1284.4,286.7 L1286.4,292.4 L1288.4,289.4 L1290.4,297.6 L1292.4,297.7 L1294.4,310.7 L1296.4,309.4 L1298.4,302.8 L1300.4,307.1 L1302.4,308.7 L1304.4,326.1 L1306.4,308.3 L1308.4,305.5 L1310.4,318.3 L1312.4,310.3 L1314.4,300.3 L1316.4,313.7 L1318.4,289.9 L1320.4,299.6 L1322.4,306.4 L1324.4,295.0 L1326.4,287.7 L1328.4,291.1 L1330.4,290.0 L1332.4,291.0 L1334.4,294.4 L1336.4,293.9 L1338.4,291.6 L1340.5,290.1 L1342.5,286.9 L1344.5,300.4 L1346.5,293.2 L1348.5,304.2 L1350.5,297.2 L1352.5,313.9 L1354.5,314.1 L1356.5,306.0 L1358.5,307.3 L1360.5,309.4 L1362.5,320.9 L1364.5,313.7 L1366.5,307.6 L1368.5,314.3 L1370.5,305.9 L1372.5,311.0 L1374.5,315.1 L1376.5,307.2 L1378.5,304.9 L1380.5,303.2 L1382.5,300.1 L1384.5,304.7 L1386.5,293.0 L1388.5,301.5 L1390.5,308.2 L1392.5,312.1 L1394.5,308.9 L1396.5,298.4 L1398.5,302.5 L1400.5,308.1 L1402.5,316.6 L1404.5,313.7 L1406.5,314.6 L1408.5,300.8 L1410.5,311.3 L1412.5,313.3 L1414.5,324.5 L1416.5,312.3 L1418.5,313.8 L1420.5,320.4 L1422.5,324.0 L1424.5,318.0 L1426.5,318.4 L1428.5,332.1 L1430.5,333.1 L1432.5,332.9 L1434.5,333.0 L1436.5,329.6 L1438.5,324.4 L1440.5,321.1 L1442.5,317.0 L1444.5,317.7 L1446.5,313.0 L1448.5,314.4 L1450.5,312.0 L1452.5,307.5 L1454.5,313.1 L1456.5,328.9 L1458.5,318.9 L1460.5,314.0 L1462.5,316.8 L1464.5,301.8 L1466.5,313.8 L1468.5,319.2 L1470.5,308.8 L1472.5,317.5 L1474.5,311.7 L1476.5,304.5 L1478.5,307.8 L1480.5,314.5 L1482.5,315.3 L1484.5,311.0 L1486.5,310.7 L1488.5,312.5 L1490.5,309.3 L1492.5,313.9 L1494.5,309.3 L1496.5,303.3 L1498.5,318.6 L1500.5,317.9 L1502.5,317.4 L1504.5,314.3 L1506.5,320.5 L1508.5,310.5 L1510.5,319.2 L1512.5,323.9 L1514.5,292.5 L1516.5,306.0 L1518.5,315.5 L1520.5,308.6 L1522.5,319.5 L1524.5,310.7 L1526.5,314.4 L1528.5,311.7 L1530.5,311.6 L1532.5,309.7 L1534.5,311.4 L1536.5,311.4 L1538.5,305.0 L1540.5,309.9 L1542.5,320.6 L1544.5,317.2 L1546.5,311.3 L1548.5,310.7 L1550.5,308.4 L1552.5,307.7 L1554.5,310.2 L1556.5,320.6 L1558.5,312.4 L1560.5,306.4 L1562.5,312.5 L1564.5,320.0 L1566.5,312.3 L1568.5,312.9 L1570.5,307.2 L1572.5,310.0 L1574.5,306.9 L1576.5,309.5 L1578.5,313.1 L1580.5,312.0 L1582.6,301.6 L1584.6,302.1 L1586.6,311.1 L1588.6,308.0 L1590.6,304.8 L1592.6,306.2 L1594.6,300.5 L1596.6,293.3 L1598.6,311.6 L1600.6,305.4 L1602.6,312.5 L1604.6,296.1 L1606.6,293.8 L1608.6,310.6 L1610.6,302.1 L1612.6,298.8 L1614.6,305.7 L1616.6,307.9 L1618.6,293.3 L1620.6,306.2 L1622.6,294.5 L1624.6,312.7 L1626.6,306.1 L1628.6,302.4 L1630.6,301.8 L1632.6,295.6 L1634.6,302.7 L1636.6,294.7 L1638.6,298.9 L1640.6,297.4 L1642.6,312.8 L1644.6,304.2 L1646.6,297.9 L1648.6,308.4 L1650.6,313.0 L1652.6,305.0 L1654.6,309.8 L1656.6,308.1 L1658.6,311.7 L1660.6,305.9 L1662.6,307.3 L1664.6,314.1 L1666.6,313.5 L1668.6,309.0 L1670.6,301.0 L1672.6,306.3 L1674.6,304.6 L1676.6,306.8 L1678.6,300.4 L1680.6,302.9 L1682.6,299.5 L1684.6,308.7 L1686.6,296.4 L1688.6,300.1 L1690.6,295.3 L1692.6,305.0 L1694.6,306.7 L1696.6,303.4 L1698.6,303.0 L1700.6,304.6 L1702.6,301.3 L1704.6,297.3 L1706.6,295.9 L1708.6,307.4 L1710.6,304.4 L1712.6,300.6 L1714.6,311.3 L1716.6,305.5 L1718.6,307.0 L1720.6,304.1 L1722.6,311.1 L1724.6,309.2 L1726.6,314.2 L1728.6,314.5 L1730.6,307.9 L1732.6,307.3 L1734.6,302.7 L1736.6,307.5 L1738.6,302.4 L1740.6,301.7 L1742.6,302.2 L1744.6,297.6 L1746.6,295.9 L1748.6,295.0 L1750.6,300.0 L1752.6,300.7 L1754.6,293.5 L1756.6,275.6 L1758.6,291.8 L1760.6,286.7 L1762.6,291.8 L1764.6,300.3 L1766.6,299.2 L1768.6,295.6 L1770.6,310.9 L1772.6,293.0 L1774.6,303.8 L1776.6,306.8 L1778.6,306.0 L1780.6,298.0 L1782.6,307.2 L1784.6,304.2 L1786.6,281.1 L1788.6,290.4 L1790.6,294.3 L1792.6,291.0 L1794.6,298.2 L1796.6,283.0 L1798.6,289.5 L1800.6,303.3 L1802.6,308.9 L1804.6,304.9 L1806.6,298.5 L1808.6,309.0 L1810.6,302.9 L1812.6,301.8 L1814.6,305.1 L1816.6,309.7 L1818.6,311.3 L1820.6,318.8 L1822.7,312.0 L1824.7,310.9 L1826.7,306.9 L1828.7,306.3 L1830.7,302.1 L1832.7,309.3 L1834.7,307.3 L1836.7,299.4 L1838.7,305.9 L1840.7,301.1 L1842.7,295.0 L1844.7,306.5 L1846.7,299.7 L1848.7,293.6 L1850.7,295.1 L1852.7,319.0 L1854.7,307.0 L1856.7,316.4 L1858.7,322.1 L1860.7,309.9 L1862.7,310.6 L1864.7,310.9 L1866.7,303.6 L1868.7,310.8 L1870.7,309.8 L1872.7,314.8 L1874.7,315.0 L1876.7,310.6 L1878.7,299.4 L1880.7,301.7 L1882.7,318.8 L1884.7,314.6 L1886.7,320.6 L1888.7,317.4 L1890.7,324.4 L1892.7,320.7 L1894.7,314.4 L1896.7,311.9 L1898.7,304.9 L1900.7,316.4 L1902.7,317.4 L1904.7,313.1 L1906.7,304.3 L1908.7,308.7 L1910.7,309.1 L1912.7,307.9 L1914.7,305.4 L1916.7,309.0 L1918.7,310.2 L1920.7,302.8 L1922.7,310.7 L1924.7,302.6 L1926.7,316.2 L1928.7,312.5 L1930.7,311.4 L1932.7,300.4 L1934.7,298.8 L1936.7,309.3 L1938.7,317.8 L1940.7,316.0 L1942.7,317.2 L1944.7,319.4 L1946.7,315.9 L1948.7,324.5 L1950.7,325.9 L1952.7,327.5 L1954.7,332.4 L1956.7,333.5 L1958.7,332.2 L1960.7,343.1 L1962.7,328.1 L1964.7,332.3 L1966.7,327.4 L1968.7,327.2 L1970.7,326.5 L1972.7,332.7 L1974.7,326.9 L1976.7,321.5 L1978.7,328.3 L1980.7,324.4 L1982.7,316.0 L1984.7,329.6 L1986.7,325.2 L1988.7,326.2 L1990.7,329.3 L1992.7,336.9 L1994.7,331.3 L1996.7,326.3 L1998.7,340.1 L2000.7,344.2 L2002.7,332.8 L2004.7,343.9 L2006.7,336.8 L2008.7,337.5 L2010.7,335.8 L2012.7,342.8 L2014.7,335.4 L2016.7,342.4 L2018.7,338.3 L2020.7,343.5 L2022.7,342.7 L2024.7,355.6 L2026.7,342.4 L2028.7,345.3 L2030.7,336.1 L2032.7,345.3 L2034.7,344.1 L2036.7,344.4 L2038.7,355.8 L2040.7,346.4 L2042.7,345.1 L2044.7,345.9 L2046.7,350.0 L2048.7,345.7 L2050.7,355.1 L2052.7,346.7 L2054.7,356.4 L2056.7,337.0 L2058.7,354.3 L2060.7,360.7 L2062.8,362.2 L2064.8,362.7 L2066.8,362.7 L2068.8,352.4 L2070.8,352.4 L2072.8,349.7 L2074.8,349.8 L2076.8,342.3 L2078.8,342.3 L2080.8,349.4 L2082.8,350.1 L2084.8,350.1 L2086.8,362.1 L2088.8,361.8 L2090.8,362.1 L2092.8,360.9 L2094.8,354.0 L2096.8,362.0 L2098.8,361.6 L2100.8,355.4 L2102.8,352.5 L2104.8,362.1 L2106.8,362.4 L2108.8,358.0 L2110.8,364.4 L2112.8,368.3 L2114.8,363.1 L2116.8,362.6 L2118.8,369.5 L2120.8,366.9 L2122.8,374.7 L2124.8,369.9 L2126.8,375.2 L2128.8,379.2 L2130.8,376.9 L2132.8,374.6 L2134.8,375.7 L2136.8,370.6 L2138.8,373.1 L2140.8,377.8 L2142.8,357.0 L2144.8,363.4 L2146.8,374.7 L2148.8,384.7 L2150.8,389.4 L2152.8,391.2 L2154.8,394.1 L2156.8,393.8 L2158.8,394.8 L2160.8,404.0 L2162.8,396.0 L2164.8,399.8 L2166.8,407.0 L2168.8,400.3 L2170.8,403.4 L2172.8,394.8 L2174.8,400.4 L2176.8,400.7 L2178.8,403.2 L2180.8,410.0 L2182.8,402.5 L2184.8,401.6 L2186.8,416.1 L2188.8,410.3 L2190.8,405.1 L2192.8,414.1 L2194.8,412.9 L2196.8,416.6 L2198.8,419.7 L2200.8,419.9 L2202.8,417.7 L2204.8,419.1 L2206.8,425.4 L2208.8,420.9 L2210.8,417.8 L2212.8,424.5 L2214.8,421.3 L2216.8,420.3 L2218.8,425.7 L2220.8,419.8 L2222.8,425.4 L2224.8,431.9 L2226.8,432.6 L2228.8,430.5 L2230.8,432.9 L2232.8,426.7 L2234.8,427.4 L2236.8,432.6 L2238.8,429.2 L2240.8,436.4 L2242.8,435.5 L2244.8,436.7 L2246.8,444.8 L2248.8,448.1 L2250.8,446.5 L2252.8,440.2 L2254.8,447.1 L2256.8,451.2 L2258.8,447.8 L2260.8,450.7 L2262.8,452.5 L2264.8,464.5 L2266.8,462.0 L2268.8,459.2 L2270.8,461.2 L2272.8,460.3 L2274.8,458.0 L2276.8,460.3 L2278.8,463.4 L2280.8,464.6 L2282.8,463.7 L2284.8,470.6 L2286.8,469.8 L2288.8,470.9 L2290.8,479.3 L2292.8,474.7 L2294.8,474.6 L2296.8,473.3 L2298.8,476.3 L2300.8,474.2 L2302.8,477.0 L2304.9,476.3 L2306.9,473.5 L2308.9,471.3 L2310.9,471.5 L2312.9,470.3 L2314.9,469.1 L2316.9,483.6 L2318.9,482.9 L2320.9,481.7 L2322.9,485.8 L2324.9,487.8 L2326.9,484.4 L2328.9,487.1 L2330.9,495.6 L2332.9,490.1 L2334.9,489.8 L2336.9,490.4 L2338.9,492.5 L2340.9,495.5 L2342.9,494.5 L2344.9,499.2 L2346.9,497.1 L2348.9,499.4 L2350.9,492.5 L2352.9,493.6 L2354.9,495.6 L2356.9,494.4 L2358.9,496.4 L2360.9,495.7 L2362.9,497.1 L2364.9,501.3 L2366.9,497.8 L2368.9,495.5 L2370.9,502.1 L2372.9,507.1 L2374.9,500.5 L2376.9,505.7 L2378.9,504.8 L2380.9,502.1 L2382.9,503.0 L2384.9,497.9 L2386.9,511.4 L2388.9,504.7 L2390.9,511.4 L2392.9,508.9 L2394.9,512.7 L2396.9,514.2 L2398.9,512.9 L2400.9,513.5 L2402.9,509.1 L2404.9,515.7 L2406.9,513.0 L2408.9,509.9 L2410.9,511.7 L2412.9,513.5 L2414.9,519.5 L2416.9,515.2 L2418.9,518.0 L2420.9,516.0 L2422.9,519.8 L2424.9,516.6 L2426.9,522.3 L2428.9,517.2 L2430.9,519.8 L2432.9,519.2 L2434.9,515.2 L2436.9,518.2 L2438.9,521.5 L2440.9,519.8 L2442.9,524.3 L2444.9,523.4 L2446.9,526.5 L2448.9,524.8 L2450.9,531.8 L2452.9,525.9 L2454.9,526.4 L2456.9,532.6 L2458.9,531.4 L2460.9,532.6 L2462.9,531.3 L2464.9,538.2 L2466.9,532.6 L2468.9,536.1 L2470.9,537.9 L2472.9,538.1 L2474.9,539.0 L2476.9,539.4 L2478.9,536.3 L2480.9,536.2 L2482.9,543.5 L2484.9,538.8 L2486.9,539.0 L2488.9,540.8 L2490.9,541.2 L2492.9,539.5 L2494.9,535.9 L2496.9,538.6 L2498.9,540.1 L2500.9,542.2 L2502.9,538.6 L2504.9,537.5 L2506.9,538.5 L2508.9,536.3 L2510.9,540.2 L2512.9,542.5 L2514.9,546.2 L2516.9,539.1 L2518.9,541.2 L2520.9,542.3 L2522.9,543.1 L2524.9,541.8 L2526.9,539.8 L2528.9,538.3 L2530.9,541.6 L2532.9,539.9 L2534.9,539.8 L2536.9,540.6 L2538.9,544.0 L2540.9,539.9 L2542.9,543.5 L2545.0,544.3 L2547.0,542.1 L2549.0,543.8 L2551.0,542.1 L2553.0,542.3 L2555.0,543.9 L2557.0,541.1 L2559.0,540.8 L2561.0,544.4 L2563.0,543.9 L2565.0,535.5 L2567.0,539.4 L2569.0,542.8 L2571.0,541.1 L2573.0,539.3 L2575.0,539.2 L2577.0,538.1 L2579.0,542.3 L2581.0,542.2 L2583.0,544.0 L2585.0,546.6 L2587.0,541.5 L2589.0,542.2 L2591.0,545.3 L2593.0,543.6 L2595.0,546.7 L2597.0,545.4 L2599.0,547.7 L2601.0,550.9 L2603.0,546.0 L2605.0,547.5 L2607.0,546.0 L2609.0,550.6 L2611.0,549.3 L2613.0,540.7 L2615.0,546.2 L2617.0,549.1 L2619.0,554.5 L2621.0,547.6 L2623.0,548.5 L2625.0,548.1 L2627.0,548.2 L2629.0,550.2 L2631.0,552.3 L2633.0,548.8 L2635.0,552.9 L2637.0,550.7 L2639.0,550.6 L2641.0,546.0 L2643.0,544.8 L2645.0,542.8 L2647.0,550.1 L2649.0,545.3 L2651.0,543.1 L2653.0,545.3 L2655.0,548.2 L2657.0,544.6 L2659.0,540.6 L2661.0,546.9 L2663.0,545.2 L2665.0,550.0 L2665.0,584.0 L256.0,584.0 Z" fill="#73bf69" fill-opacity="0.1" stroke="none"/><path d="M256.0,522.7 L258.0,528.4 L260.0,526.5 L262.0,531.1 L264.0,529.6 L266.0,529.9 L268.0,538.2 L270.0,539.2 L272.0,544.3 L274.0,538.7 L276.0,539.4 L278.0,540.5 L280.0,538.6 L282.0,538.1 L284.0,541.4 L286.0,539.7 L288.0,539.1 L290.0,539.9 L292.0,550.4 L294.0,543.5 L296.0,540.7 L298.0,546.3 L300.0,545.5 L302.0,538.8 L304.0,544.0 L306.0,548.7 L308.0,546.9 L310.0,543.8 L312.0,543.9 L314.0,541.7 L316.0,547.4 L318.0,543.5 L320.0,544.5 L322.0,544.5 L324.0,541.6 L326.0,542.6 L328.0,546.4 L330.0,547.5 L332.0,545.7 L334.0,546.9 L336.0,543.7 L338.0,549.8 L340.0,548.4 L342.0,543.3 L344.0,545.7 L346.0,547.7 L348.0,546.1 L350.0,547.2 L352.0,546.7 L354.0,550.0 L356.0,550.2 L358.0,546.9 L360.0,547.7 L362.0,548.7 L364.0,547.8 L366.0,549.3 L368.0,550.1 L370.0,554.1 L372.0,547.2 L374.0,549.5 L376.0,547.8 L378.1,549.3 L380.1,545.1 L382.1,547.1 L384.1,546.7 L386.1,549.5 L388.1,545.3 L390.1,547.3 L392.1,547.9 L394.1,549.0 L396.1,548.3 L398.1,549.2 L400.1,549.5 L402.1,545.7 L404.1,543.8 L406.1,547.0 L408.1,547.3 L410.1,547.7 L412.1,547.1 L414.1,546.9 L416.1,544.9 L418.1,542.7 L420.1,545.0 L422.1,545.0 L424.1,541.9 L426.1,543.1 L428.1,540.4 L430.1,545.7 L432.1,540.5 L434.1,541.6 L436.1,546.3 L438.1,539.7 L440.1,537.2 L442.1,539.4 L444.1,545.4 L446.1,544.2 L448.1,538.2 L450.1,540.1 L452.1,541.0 L454.1,539.1 L456.1,541.3 L458.1,541.9 L460.1,541.9 L462.1,542.7 L464.1,536.1 L466.1,541.5 L468.1,541.3 L470.1,542.8 L472.1,542.4 L474.1,538.8 L476.1,541.7 L478.1,542.6 L480.1,539.0 L482.1,533.7 L484.1,536.8 L486.1,540.0 L488.1,537.9 L490.1,537.5 L492.1,542.3 L494.1,539.2 L496.1,539.3 L498.1,537.9 L500.1,535.3 L502.1,539.6 L504.1,538.3 L506.1,543.1 L508.1,541.7 L510.1,537.7 L512.1,535.7 L514.1,540.0 L516.1,535.6 L518.1,539.8 L520.1,539.6 L522.1,542.3 L524.1,537.2 L526.1,536.4 L528.1,539.6 L530.1,538.5 L532.1,540.5 L534.1,540.7 L536.1,536.0 L538.1,539.5 L540.1,540.2 L542.1,536.4 L544.1,535.4 L546.1,531.1 L548.1,535.9 L550.1,540.7 L552.1,531.4 L554.1,532.7 L556.1,535.2 L558.1,532.0 L560.1,528.7 L562.1,530.0 L564.1,531.1 L566.1,533.0 L568.1,533.8 L570.1,533.1 L572.1,533.0 L574.1,527.4 L576.1,522.0 L578.1,528.0 L580.1,527.9 L582.1,525.7 L584.1,521.3 L586.1,521.5 L588.1,522.2 L590.1,524.1 L592.1,521.2 L594.1,517.6 L596.1,519.2 L598.1,515.5 L600.1,521.4 L602.1,517.5 L604.1,513.2 L606.1,513.1 L608.1,510.5 L610.1,511.0 L612.1,510.4 L614.1,512.9 L616.1,511.7 L618.2,502.0 L620.2,506.4 L622.2,509.2 L624.2,505.5 L626.2,503.4 L628.2,502.1 L630.2,499.8 L632.2,505.1 L634.2,504.7 L636.2,501.1 L638.2,501.8 L640.2,497.2 L642.2,500.1 L644.2,499.2 L646.2,501.4 L648.2,499.6 L650.2,492.8 L652.2,493.9 L654.2,488.3 L656.2,489.5 L658.2,498.4 L660.2,494.4 L662.2,490.7 L664.2,490.4 L666.2,491.3 L668.2,490.0 L670.2,487.2 L672.2,489.9 L674.2,488.0 L676.2,488.4 L678.2,486.1 L680.2,480.6 L682.2,483.8 L684.2,484.7 L686.2,484.2 L688.2,481.4 L690.2,481.2 L692.2,486.8 L694.2,473.7 L696.2,486.3 L698.2,484.0 L700.2,478.3 L702.2,481.6 L704.2,478.0 L706.2,476.9 L708.2,478.0 L710.2,479.6 L712.2,477.0 L714.2,469.1 L716.2,470.0 L718.2,476.7 L720.2,471.2 L722.2,463.9 L724.2,471.4 L726.2,477.6 L728.2,471.0 L730.2,466.4 L732.2,475.2 L734.2,473.3 L736.2,465.1 L738.2,469.9 L740.2,462.0 L742.2,466.5 L744.2,462.5 L746.2,468.2 L748.2,458.1 L750.2,454.0 L752.2,461.5 L754.2,457.3 L756.2,456.7 L758.2,455.1 L760.2,454.1 L762.2,457.0 L764.2,452.2 L766.2,452.9 L768.2,446.7 L770.2,447.1 L772.2,452.6 L774.2,447.3 L776.2,440.3 L778.2,439.3 L780.2,443.9 L782.2,445.0 L784.2,439.6 L786.2,437.6 L788.2,432.0 L790.2,434.0 L792.2,431.5 L794.2,428.8 L796.2,431.1 L798.2,431.4 L800.2,433.5 L802.2,434.7 L804.2,428.6 L806.2,425.2 L808.2,432.4 L810.2,429.0 L812.2,426.5 L814.2,421.6 L816.2,419.4 L818.2,414.3 L820.2,415.2 L822.2,414.8 L824.2,415.9 L826.2,416.9 L828.2,410.1 L830.2,416.3 L832.2,411.6 L834.2,412.1 L836.2,424.1 L838.2,416.2 L840.2,421.1 L842.2,421.0 L844.2,412.7 L846.2,414.7 L848.2,406.9 L850.2,406.2 L852.2,408.4 L854.2,419.5 L856.2,410.8 L858.2,407.1 L860.3,403.8 L862.3,402.4 L864.3,408.0 L866.3,406.1 L868.3,398.4 L870.3,402.8 L872.3,399.2 L874.3,389.9 L876.3,397.4 L878.3,390.4 L880.3,390.9 L882.3,394.6 L884.3,385.7 L886.3,379.8 L888.3,388.2 L890.3,379.6 L892.3,394.1 L894.3,394.2 L896.3,385.2 L898.3,386.4 L900.3,389.2 L902.3,388.2 L904.3,393.3 L906.3,393.3 L908.3,391.3 L910.3,394.2 L912.3,389.5 L914.3,389.6 L916.3,395.2 L918.3,380.3 L920.3,381.8 L922.3,375.4 L924.3,385.7 L926.3,375.0 L928.3,373.4 L930.3,378.7 L932.3,378.1 L934.3,381.1 L936.3,378.9 L938.3,370.0 L940.3,371.0 L942.3,367.0 L944.3,370.9 L946.3,367.1 L948.3,364.0 L950.3,370.1 L952.3,368.6 L954.3,371.3 L956.3,368.8 L958.3,368.8 L960.3,362.0 L962.3,367.4 L964.3,362.0 L966.3,359.7 L968.3,375.5 L970.3,360.8 L972.3,363.1 L974.3,358.0 L976.3,368.8 L978.3,369.3 L980.3,358.1 L982.3,360.4 L984.3,360.0 L986.3,360.0 L988.3,366.4 L990.3,369.8 L992.3,365.7 L994.3,361.6 L996.3,365.9 L998.3,364.1 L1000.3,366.6 L1002.3,365.6 L1004.3,366.1 L1006.3,365.7 L1008.3,363.8 L1010.3,364.7 L1012.3,367.5 L1014.3,360.6 L1016.3,355.6 L1018.3,350.5 L1020.3,345.2 L1022.3,344.2 L1024.3,347.8 L1026.3,344.3 L1028.3,351.7 L1030.3,347.9 L1032.3,348.0 L1034.3,341.7 L1036.3,348.4 L1038.3,352.5 L1040.3,337.1 L1042.3,343.2 L1044.3,341.7 L1046.3,336.1 L1048.3,339.4 L1050.3,344.8 L1052.3,332.7 L1054.3,328.7 L1056.3,332.4 L1058.3,344.7 L1060.3,334.6 L1062.3,340.3 L1064.3,350.2 L1066.3,332.7 L1068.3,343.6 L1070.3,340.6 L1072.3,351.1 L1074.3,352.9 L1076.3,350.6 L1078.3,342.5 L1080.3,343.4 L1082.3,343.4 L1084.3,346.0 L1086.3,343.9 L1088.3,340.1 L1090.3,339.7 L1092.3,347.3 L1094.3,345.1 L1096.3,344.6 L1098.3,345.8 L1100.4,336.2 L1102.4,343.4 L1104.4,342.4 L1106.4,342.6 L1108.4,342.7 L1110.4,346.5 L1112.4,341.3 L1114.4,342.1 L1116.4,343.3 L1118.4,333.8 L1120.4,334.6 L1122.4,331.5 L1124.4,329.0 L1126.4,324.6 L1128.4,333.9 L1130.4,326.2 L1132.4,331.5 L1134.4,332.9 L1136.4,335.3 L1138.4,328.3 L1140.4,330.1 L1142.4,319.8 L1144.4,325.9 L1146.4,328.0 L1148.4,336.5 L1150.4,328.0 L1152.4,331.4 L1154.4,327.8 L1156.4,330.1 L1158.4,329.2 L1160.4,328.7 L1162.4,318.7 L1164.4,327.7 L1166.4,320.1 L1168.4,326.8 L1170.4,328.9 L1172.4,320.5 L1174.4,310.9 L1176.4,315.6 L1178.4,316.0 L1180.4,311.0 L1182.4,312.9 L1184.4,312.8 L1186.4,320.4 L1188.4,324.5 L1190.4,325.9 L1192.4,313.4 L1194.4,312.9 L1196.4,317.0 L1198.4,308.2 L1200.4,309.9 L1202.4,323.5 L1204.4,316.7 L1206.4,310.6 L1208.4,315.2 L1210.4,313.3 L1212.4,309.6 L1214.4,307.2 L1216.4,305.1 L1218.4,311.0 L1220.4,316.1 L1222.4,306.1 L1224.4,313.4 L1226.4,309.6 L1228.4,315.9 L1230.4,317.8 L1232.4,312.1 L1234.4,304.0 L1236.4,301.3 L1238.4,298.0 L1240.4,289.6 L1242.4,304.0 L1244.4,293.4 L1246.4,282.4 L1248.4,288.0 L1250.4,282.4 L1252.4,287.4 L1254.4,298.8 L1256.4,297.0 L1258.4,287.5 L1260.4,289.0 L1262.4,297.4 L1264.4,297.9 L1266.4,295.6 L1268.4,297.9 L1270.4,297.8 L1272.4,302.3 L1274.4,309.7 L1276.4,304.7 L1278.4,301.8 L1280.4,292.5 L1282.4,294.0 L1284.4,286.7 L1286.4,292.4 L1288.4,289.4 L1290.4,297.6 L1292.4,297.7 L1294.4,310.7 L1296.4,309.4 L1298.4,302.8 L1300.4,307.1 L1302.4,308.7 L1304.4,326.1 L1306.4,308.3 L1308.4,305.5 L1310.4,318.3 L1312.4,310.3 L1314.4,300.3 L1316.4,313.7 L1318.4,289.9 L1320.4,299.6 L1322.4,306.4 L1324.4,295.0 L1326.4,287.7 L1328.4,291.1 L1330.4,290.0 L1332.4,291.0 L1334.4,294.4 L1336.4,293.9 L1338.4,291.6 L1340.5,290.1 L1342.5,286.9 L1344.5,300.4 L1346.5,293.2 L1348.5,304.2 L1350.5,297.2 L1352.5,313.9 L1354.5,314.1 L1356.5,306.0 L1358.5,307.3 L1360.5,309.4 L1362.5,320.9 L1364.5,313.7 L1366.5,307.6 L1368.5,314.3 L1370.5,305.9 L1372.5,311.0 L1374.5,315.1 L1376.5,307.2 L1378.5,304.9 L1380.5,303.2 L1382.5,300.1 L1384.5,304.7 L1386.5,293.0 L1388.5,301.5 L1390.5,308.2 L1392.5,312.1 L1394.5,308.9 L1396.5,298.4 L1398.5,302.5 L1400.5,308.1 L1402.5,316.6 L1404.5,313.7 L1406.5,314.6 L1408.5,300.8 L1410.5,311.3 L1412.5,313.3 L1414.5,324.5 L1416.5,312.3 L1418.5,313.8 L1420.5,320.4 L1422.5,324.0 L1424.5,318.0 L1426.5,318.4 L1428.5,332.1 L1430.5,333.1 L1432.5,332.9 L1434.5,333.0 L1436.5,329.6 L1438.5,324.4 L1440.5,321.1 L1442.5,317.0 L1444.5,317.7 L1446.5,313.0 L1448.5,314.4 L1450.5,312.0 L1452.5,307.5 L1454.5,313.1 L1456.5,328.9 L1458.5,318.9 L1460.5,314.0 L1462.5,316.8 L1464.5,301.8 L1466.5,313.8 L1468.5,319.2 L1470.5,308.8 L1472.5,317.5 L1474.5,311.7 L1476.5,304.5 L1478.5,307.8 L1480.5,314.5 L1482.5,315.3 L1484.5,311.0 L1486.5,310.7 L1488.5,312.5 L1490.5,309.3 L1492.5,313.9 L1494.5,309.3 L1496.5,303.3 L1498.5,318.6 L1500.5,317.9 L1502.5,317.4 L1504.5,314.3 L1506.5,320.5 L1508.5,310.5 L1510.5,319.2 L1512.5,323.9 L1514.5,292.5 L1516.5,306.0 L1518.5,315.5 L1520.5,308.6 L1522.5,319.5 L1524.5,310.7 L1526.5,314.4 L1528.5,311.7 L1530.5,311.6 L1532.5,309.7 L1534.5,311.4 L1536.5,311.4 L1538.5,305.0 L1540.5,309.9 L1542.5,320.6 L1544.5,317.2 L1546.5,311.3 L1548.5,310.7 L1550.5,308.4 L1552.5,307.7 L1554.5,310.2 L1556.5,320.6 L1558.5,312.4 L1560.5,306.4 L1562.5,312.5 L1564.5,320.0 L1566.5,312.3 L1568.5,312.9 L1570.5,307.2 L1572.5,310.0 L1574.5,306.9 L1576.5,309.5 L1578.5,313.1 L1580.5,312.0 L1582.6,301.6 L1584.6,302.1 L1586.6,311.1 L1588.6,308.0 L1590.6,304.8 L1592.6,306.2 L1594.6,300.5 L1596.6,293.3 L1598.6,311.6 L1600.6,305.4 L1602.6,312.5 L1604.6,296.1 L1606.6,293.8 L1608.6,310.6 L1610.6,302.1 L1612.6,298.8 L1614.6,305.7 L1616.6,307.9 L1618.6,293.3 L1620.6,306.2 L1622.6,294.5 L1624.6,312.7 L1626.6,306.1 L1628.6,302.4 L1630.6,301.8 L1632.6,295.6 L1634.6,302.7 L1636.6,294.7 L1638.6,298.9 L1640.6,297.4 L1642.6,312.8 L1644.6,304.2 L1646.6,297.9 L1648.6,308.4 L1650.6,313.0 L1652.6,305.0 L1654.6,309.8 L1656.6,308.1 L1658.6,311.7 L1660.6,305.9 L1662.6,307.3 L1664.6,314.1 L1666.6,313.5 L1668.6,309.0 L1670.6,301.0 L1672.6,306.3 L1674.6,304.6 L1676.6,306.8 L1678.6,300.4 L1680.6,302.9 L1682.6,299.5 L1684.6,308.7 L1686.6,296.4 L1688.6,300.1 L1690.6,295.3 L1692.6,305.0 L1694.6,306.7 L1696.6,303.4 L1698.6,303.0 L1700.6,304.6 L1702.6,301.3 L1704.6,297.3 L1706.6,295.9 L1708.6,307.4 L1710.6,304.4 L1712.6,300.6 L1714.6,311.3 L1716.6,305.5 L1718.6,307.0 L1720.6,304.1 L1722.6,311.1 L1724.6,309.2 L1726.6,314.2 L1728.6,314.5 L1730.6,307.9 L1732.6,307.3 L1734.6,302.7 L1736.6,307.5 L1738.6,302.4 L1740.6,301.7 L1742.6,302.2 L1744.6,297.6 L1746.6,295.9 L1748.6,295.0 L1750.6,300.0 L1752.6,300.7 L1754.6,293.5 L1756.6,275.6 L1758.6,291.8 L1760.6,286.7 L1762.6,291.8 L1764.6,300.3 L1766.6,299.2 L1768.6,295.6 L1770.6,310.9 L1772.6,293.0 L1774.6,303.8 L1776.6,306.8 L1778.6,306.0 L1780.6,298.0 L1782.6,307.2 L1784.6,304.2 L1786.6,281.1 L1788.6,290.4 L1790.6,294.3 L1792.6,291.0 L1794.6,298.2 L1796.6,283.0 L1798.6,289.5 L1800.6,303.3 L1802.6,308.9 L1804.6,304.9 L1806.6,298.5 L1808.6,309.0 L1810.6,302.9 L1812.6,301.8 L1814.6,305.1 L1816.6,309.7 L1818.6,311.3 L1820.6,318.8 L1822.7,312.0 L1824.7,310.9 L1826.7,306.9 L1828.7,306.3 L1830.7,302.1 L1832.7,309.3 L1834.7,307.3 L1836.7,299.4 L1838.7,305.9 L1840.7,301.1 L1842.7,295.0 L1844.7,306.5 L1846.7,299.7 L1848.7,293.6 L1850.7,295.1 L1852.7,319.0 L1854.7,307.0 L1856.7,316.4 L1858.7,322.1 L1860.7,309.9 L1862.7,310.6 L1864.7,310.9 L1866.7,303.6 L1868.7,310.8 L1870.7,309.8 L1872.7,314.8 L1874.7,315.0 L1876.7,310.6 L1878.7,299.4 L1880.7,301.7 L1882.7,318.8 L1884.7,314.6 L1886.7,320.6 L1888.7,317.4 L1890.7,324.4 L1892.7,320.7 L1894.7,314.4 L1896.7,311.9 L1898.7,304.9 L1900.7,316.4 L1902.7,317.4 L1904.7,313.1 L1906.7,304.3 L1908.7,308.7 L1910.7,309.1 L1912.7,307.9 L1914.7,305.4 L1916.7,309.0 L1918.7,310.2 L1920.7,302.8 L1922.7,310.7 L1924.7,302.6 L1926.7,316.2 L1928.7,312.5 L1930.7,311.4 L1932.7,300.4 L1934.7,298.8 L1936.7,309.3 L1938.7,317.8 L1940.7,316.0 L1942.7,317.2 L1944.7,319.4 L1946.7,315.9 L1948.7,324.5 L1950.7,325.9 L1952.7,327.5 L1954.7,332.4 L1956.7,333.5 L1958.7,332.2 L1960.7,343.1 L1962.7,328.1 L1964.7,332.3 L1966.7,327.4 L1968.7,327.2 L1970.7,326.5 L1972.7,332.7 L1974.7,326.9 L1976.7,321.5 L1978.7,328.3 L1980.7,324.4 L1982.7,316.0 L1984.7,329.6 L1986.7,325.2 L1988.7,326.2 L1990.7,329.3 L1992.7,336.9 L1994.7,331.3 L1996.7,326.3 L1998.7,340.1 L2000.7,344.2 L2002.7,332.8 L2004.7,343.9 L2006.7,336.8 L2008.7,337.5 L2010.7,335.8 L2012.7,342.8 L2014.7,335.4 L2016.7,342.4 L2018.7,338.3 L2020.7,343.5 L2022.7,342.7 L2024.7,355.6 L2026.7,342.4 L2028.7,345.3 L2030.7,336.1 L2032.7,345.3 L2034.7,344.1 L2036.7,344.4 L2038.7,355.8 L2040.7,346.4 L2042.7,345.1 L2044.7,345.9 L2046.7,350.0 L2048.7,345.7 L2050.7,355.1 L2052.7,346.7 L2054.7,356.4 L2056.7,337.0 L2058.7,354.3 L2060.7,360.7 L2062.8,362.2 L2064.8,362.7 L2066.8,362.7 L2068.8,352.4 L2070.8,352.4 L2072.8,349.7 L2074.8,349.8 L2076.8,342.3 L2078.8,342.3 L2080.8,349.4 L2082.8,350.1 L2084.8,350.1 L2086.8,362.1 L2088.8,361.8 L2090.8,362.1 L2092.8,360.9 L2094.8,354.0 L2096.8,362.0 L2098.8,361.6 L2100.8,355.4 L2102.8,352.5 L2104.8,362.1 L2106.8,362.4 L2108.8,358.0 L2110.8,364.4 L2112.8,368.3 L2114.8,363.1 L2116.8,362.6 L2118.8,369.5 L2120.8,366.9 L2122.8,374.7 L2124.8,369.9 L2126.8,375.2 L2128.8,379.2 L2130.8,376.9 L2132.8,374.6 L2134.8,375.7 L2136.8,370.6 L2138.8,373.1 L2140.8,377.8 L2142.8,357.0 L2144.8,363.4 L2146.8,374.7 L2148.8,384.7 L2150.8,389.4 L2152.8,391.2 L2154.8,394.1 L2156.8,393.8 L2158.8,394.8 L2160.8,404.0 L2162.8,396.0 L2164.8,399.8 L2166.8,407.0 L2168.8,400.3 L2170.8,403.4 L2172.8,394.8 L2174.8,400.4 L2176.8,400.7 L2178.8,403.2 L2180.8,410.0 L2182.8,402.5 L2184.8,401.6 L2186.8,416.1 L2188.8,410.3 L2190.8,405.1 L2192.8,414.1 L2194.8,412.9 L2196.8,416.6 L2198.8,419.7 L2200.8,419.9 L2202.8,417.7 L2204.8,419.1 L2206.8,425.4 L2208.8,420.9 L2210.8,417.8 L2212.8,424.5 L2214.8,421.3 L2216.8,420.3 L2218.8,425.7 L2220.8,419.8 L2222.8,425.4 L2224.8,431.9 L2226.8,432.6 L2228.8,430.5 L2230.8,432.9 L2232.8,426.7 L2234.8,427.4 L2236.8,432.6 L2238.8,429.2 L2240.8,436.4 L2242.8,435.5 L2244.8,436.7 L2246.8,444.8 L2248.8,448.1 L2250.8,446.5 L2252.8,440.2 L2254.8,447.1 L2256.8,451.2 L2258.8,447.8 L2260.8,450.7 L2262.8,452.5 L2264.8,464.5 L2266.8,462.0 L2268.8,459.2 L2270.8,461.2 L2272.8,460.3 L2274.8,458.0 L2276.8,460.3 L2278.8,463.4 L2280.8,464.6 L2282.8,463.7 L2284.8,470.6 L2286.8,469.8 L2288.8,470.9 L2290.8,479.3 L2292.8,474.7 L2294.8,474.6 L2296.8,473.3 L2298.8,476.3 L2300.8,474.2 L2302.8,477.0 L2304.9,476.3 L2306.9,473.5 L2308.9,471.3 L2310.9,471.5 L2312.9,470.3 L2314.9,469.1 L2316.9,483.6 L2318.9,482.9 L2320.9,481.7 L2322.9,485.8 L2324.9,487.8 L2326.9,484.4 L2328.9,487.1 L2330.9,495.6 L2332.9,490.1 L2334.9,489.8 L2336.9,490.4 L2338.9,492.5 L2340.9,495.5 L2342.9,494.5 L2344.9,499.2 L2346.9,497.1 L2348.9,499.4 L2350.9,492.5 L2352.9,493.6 L2354.9,495.6 L2356.9,494.4 L2358.9,496.4 L2360.9,495.7 L2362.9,497.1 L2364.9,501.3 L2366.9,497.8 L2368.9,495.5 L2370.9,502.1 L2372.9,507.1 L2374.9,500.5 L2376.9,505.7 L2378.9,504.8 L2380.9,502.1 L2382.9,503.0 L2384.9,497.9 L2386.9,511.4 L2388.9,504.7 L2390.9,511.4 L2392.9,508.9 L2394.9,512.7 L2396.9,514.2 L2398.9,512.9 L2400.9,513.5 L2402.9,509.1 L2404.9,515.7 L2406.9,513.0 L2408.9,509.9 L2410.9,511.7 L2412.9,513.5 L2414.9,519.5 L2416.9,515.2 L2418.9,518.0 L2420.9,516.0 L2422.9,519.8 L2424.9,516.6 L2426.9,522.3 L2428.9,517.2 L2430.9,519.8 L2432.9,519.2 L2434.9,515.2 L2436.9,518.2 L2438.9,521.5 L2440.9,519.8 L2442.9,524.3 L2444.9,523.4 L2446.9,526.5 L2448.9,524.8 L2450.9,531.8 L2452.9,525.9 L2454.9,526.4 L2456.9,532.6 L2458.9,531.4 L2460.9,532.6 L2462.9,531.3 L2464.9,538.2 L2466.9,532.6 L2468.9,536.1 L2470.9,537.9 L2472.9,538.1 L2474.9,539.0 L2476.9,539.4 L2478.9,536.3 L2480.9,536.2 L2482.9,543.5 L2484.9,538.8 L2486.9,539.0 L2488.9,540.8 L2490.9,541.2 L2492.9,539.5 L2494.9,535.9 L2496.9,538.6 L2498.9,540.1 L2500.9,542.2 L2502.9,538.6 L2504.9,537.5 L2506.9,538.5 L2508.9,536.3 L2510.9,540.2 L2512.9,542.5 L2514.9,546.2 L2516.9,539.1 L2518.9,541.2 L2520.9,542.3 L2522.9,543.1 L2524.9,541.8 L2526.9,539.8 L2528.9,538.3 L2530.9,541.6 L2532.9,539.9 L2534.9,539.8 L2536.9,540.6 L2538.9,544.0 L2540.9,539.9 L2542.9,543.5 L2545.0,544.3 L2547.0,542.1 L2549.0,543.8 L2551.0,542.1 L2553.0,542.3 L2555.0,543.9 L2557.0,541.1 L2559.0,540.8 L2561.0,544.4 L2563.0,543.9 L2565.0,535.5 L2567.0,539.4 L2569.0,542.8 L2571.0,541.1 L2573.0,539.3 L2575.0,539.2 L2577.0,538.1 L2579.0,542.3 L2581.0,542.2 L2583.0,544.0 L2585.0,546.6 L2587.0,541.5 L2589.0,542.2 L2591.0,545.3 L2593.0,543.6 L2595.0,546.7 L2597.0,545.4 L2599.0,547.7 L2601.0,550.9 L2603.0,546.0 L2605.0,547.5 L2607.0,546.0 L2609.0,550.6 L2611.0,549.3 L2613.0,540.7 L2615.0,546.2 L2617.0,549.1 L2619.0,554.5 L2621.0,547.6 L2623.0,548.5 L2625.0,548.1 L2627.0,548.2 L2629.0,550.2 L2631.0,552.3 L2633.0,548.8 L2635.0,552.9 L2637.0,550.7 L2639.0,550.6 L2641.0,546.0 L2643.0,544.8 L2645.0,542.8 L2647.0,550.1 L2649.0,545.3 L2651.0,543.1 L2653.0,545.3 L2655.0,548.2 L2657.0,544.6 L2659.0,540.6 L2661.0,546.9 L2663.0,545.2 L2665.0,550.0" fill="none" stroke="#73bf69" stroke-width="2.1" stroke-linejoin="round"/><g stroke="#688c9f" stroke-width="2" stroke-dasharray="6 4" shape-rendering="crispEdges"><line x1="2021" y1="244" x2="2021" y2="584"/><line x1="256" y1="519" x2="2665" y2="519"/></g><circle cx="2021" cy="343.500" r="10" fill="#73bf69" fill-opacity="0.5"/><circle cx="2021" cy="343.500" r="6" fill="#73bf69"/><g fill="#ccccdc" font-size="24" stroke="#ccccdc" stroke-width="0.6"><text x="238" y="349" text-anchor="end" textLength="68.3" lengthAdjust="spacing">30.0 K</text><text x="238" y="458.4" text-anchor="end" textLength="68.3" lengthAdjust="spacing">20.0 K</text><text x="238" y="568" text-anchor="end" textLength="68.3" lengthAdjust="spacing">10.0 K</text><text x="418.1" y="619.700" text-anchor="middle" textLength="131.300" lengthAdjust="spacing">12/28 06:00</text><text x="602.8" y="619.700" text-anchor="middle" textLength="131.300" lengthAdjust="spacing">12/28 08:00</text><text x="787.5" y="619.700" text-anchor="middle" textLength="131.300" lengthAdjust="spacing">12/28 10:00</text><text x="972.2" y="619.700" text-anchor="middle" textLength="131.300" lengthAdjust="spacing">12/28 12:00</text><text x="1156.9" y="619.700" text-anchor="middle" textLength="131.300" lengthAdjust="spacing">12/28 14:00</text><text x="1341.5" y="619.700" text-anchor="middle" textLength="131.300" lengthAdjust="spacing">12/28 16:00</text><text x="1526.2" y="619.700" text-anchor="middle" textLength="131.300" lengthAdjust="spacing">12/28 18:00</text><text x="1710.9" y="619.700" text-anchor="middle" textLength="131.300" lengthAdjust="spacing">12/28 20:00</text><text x="1895.6" y="619.700" text-anchor="middle" textLength="131.300" lengthAdjust="spacing">12/28 22:00</text><text x="2080.2" y="619.700" text-anchor="middle" textLength="131.300" lengthAdjust="spacing">12/29 00:00</text><text x="2264.9" y="619.700" text-anchor="middle" textLength="131.300" lengthAdjust="spacing">12/29 02:00</text><text x="2449.6" y="619.700" text-anchor="middle" textLength="131.300" lengthAdjust="spacing">12/29 04:00</text><text x="2634.3" y="619.700" text-anchor="middle" textLength="131.300" lengthAdjust="spacing">12/29 06:00</text></g></svg>
<div class="lsw" style="left:2730px;top:228px;background:#73bf69"></div>
<div class="t " style="left:2773.60px;top:219.68px;font-size:24px;line-height:24px;color:#ccccdc;transform:scaleX(0.9770);transform-origin:0 0;-webkit-text-stroke:0.55px #ccccdc;">real</div>
<div class="lsep" style="left:2714px;top:254px;width:116px"></div>
<div class="panel" style="top:660px;height:588px"><div class="corner"></div><svg class="ic" style="left:12px;top:8.800px" width="10" height="18" viewBox="0 0 10 18"><path fill="#9d9eab" d="M1.200 0.800h4.800v3.200h-4.800zM0 6.900h6.200v7.700h1.400v2.600h-7.600v-2.600h1.900v-5.200h-1.900z"/></svg></div>
<div class="t " style="left:1447.30px;top:680.10px;font-size:28px;line-height:28px;color:#ccccdc;transform:scaleX(0.9186);transform-origin:0 0;font-weight:700;">Replicas</div>
<svg class="ic" style="left:152px;top:660px" width="2696" height="592" viewBox="152 660 2696 592" font-family="Liberation Sans, sans-serif"><defs><clipPath id="rc"><rect x="216" y="770" width="2387" height="422"/></clipPath></defs><g fill="#2b2f33" shape-rendering="crispEdges"><rect x="376" y="776" width="1" height="424"/><rect x="559" y="776" width="1" height="424"/><rect x="742" y="776" width="1" height="424"/><rect x="924" y="776" width="1" height="424"/><rect x="1107" y="776" width="1" height="424"/><rect x="1290" y="776" width="1" height="424"/><rect x="1473" y="776" width="1" height="424"/><rect x="1656" y="776" width="1" height="424"/><rect x="1839" y="776" width="1" height="424"/><rect x="2022" y="776" width="1" height="424"/><rect x="2205" y="776" width="1" height="424"/><rect x="2388" y="776" width="1" height="424"/><rect x="2571" y="776" width="1" height="424"/><rect x="208" y="776" width="2395" height="1"/><rect x="208" y="841" width="2395" height="1"/><rect x="208" y="906" width="2395" height="1"/><rect x="208" y="971" width="2395" height="1"/><rect x="208" y="1036" width="2395" height="1"/><rect x="208" y="1101" width="2395" height="1"/><rect x="208" y="1166" width="2395" height="1"/></g><g clip-path="url(#rc)"><path d="M193.2,1062.0 L238.9,1088.0 L284.6,1088.0 L330.4,1088.0 L376.1,1088.0 L421.8,1088.0 L467.6,1062.0 L513.3,1036.0 L559.0,1036.0 L604.7,984.0 L650.5,984.0 L696.2,932.0 L741.9,932.0 L787.7,932.0 L833.4,932.0 L879.1,880.0 L924.8,880.0 L970.6,880.0 L1016.3,880.0 L1062.0,880.0 L1107.8,880.0 L1153.5,880.0 L1199.2,828.0 L1244.9,828.0 L1290.7,828.0 L1336.4,828.0 L1382.1,828.0 L1427.9,828.0 L1473.6,828.0 L1519.3,828.0 L1565.0,828.0 L1610.8,828.0 L1656.5,828.0 L1702.2,828.0 L1748.0,828.0 L1793.7,828.0 L1839.4,828.0 L1885.2,854.0 L1930.9,854.0 L1976.6,880.0 L2022.3,880.0 L2068.1,906.0 L2113.8,932.0 L2159.5,984.0 L2205.3,1010.0 L2251.0,1036.0 L2296.7,1062.0 L2342.4,1088.0 L2388.2,1114.0 L2433.9,1114.0 L2479.6,1140.0 L2525.4,1140.0 L2571.1,1140.0 L2571.1,1192.0 L193.2,1192.0 Z" fill="#73bf69" fill-opacity="0.1"/><path d="M193.2,1062.0 L238.9,1088.0 L284.6,1088.0 L330.4,1088.0 L376.1,1088.0 L421.8,1088.0 L467.6,1062.0 L513.3,1036.0 L559.0,1036.0 L604.7,984.0 L650.5,984.0 L696.2,932.0 L741.9,932.0 L787.7,932.0 L833.4,932.0 L879.1,880.0 L924.8,880.0 L970.6,880.0 L1016.3,880.0 L1062.0,880.0 L1107.8,880.0 L1153.5,880.0 L1199.2,828.0 L1244.9,828.0 L1290.7,828.0 L1336.4,828.0 L1382.1,828.0 L1427.9,828.0 L1473.6,828.0 L1519.3,828.0 L1565.0,828.0 L1610.8,828.0 L1656.5,828.0 L1702.2,828.0 L1748.0,828.0 L1793.7,828.0 L1839.4,828.0 L1885.2,854.0 L1930.9,854.0 L1976.6,880.0 L2022.3,880.0 L2068.1,906.0 L2113.8,932.0 L2159.5,984.0 L2205.3,1010.0 L2251.0,1036.0 L2296.7,1062.0 L2342.4,1088.0 L2388.2,1114.0 L2433.9,1114.0 L2479.6,1140.0 L2525.4,1140.0 L2571.1,1140.0" fill="none" stroke="#73bf69" stroke-width="2" stroke-linejoin="round"/><path d="M193.2,1062.0 L238.9,1088.0 L284.6,1088.0 L330.4,1088.0 L376.1,1088.0 L421.8,1088.0 L467.6,1088.0 L513.3,1088.0 L559.0,1088.0 L604.7,1088.0 L650.5,1062.0 L696.2,1062.0 L741.9,1036.0 L787.7,984.0 L833.4,984.0 L879.1,984.0 L924.8,932.0 L970.6,932.0 L1016.3,932.0 L1062.0,932.0 L1107.8,880.0 L1153.5,880.0 L1199.2,880.0 L1244.9,880.0 L1290.7,880.0 L1336.4,880.0 L1382.1,880.0 L1427.9,828.0 L1473.6,828.0 L1519.3,828.0 L1565.0,828.0 L1610.8,828.0 L1656.5,828.0 L1702.2,828.0 L1748.0,828.0 L1793.7,828.0 L1839.4,828.0 L1885.2,854.0 L1930.9,854.0 L1976.6,880.0 L2022.3,880.0 L2068.1,906.0 L2113.8,932.0 L2159.5,984.0 L2205.3,1010.0 L2251.0,1036.0 L2296.7,1062.0 L2342.4,1088.0 L2388.2,1114.0 L2433.9,1114.0 L2479.6,1140.0 L2525.4,1140.0 L2571.1,1140.0 L2571.1,1192.0 L193.2,1192.0 Z" fill="#f2cc0c" fill-opacity="0.1"/><path d="M193.2,1062.0 L238.9,1088.0 L284.6,1088.0 L330.4,1088.0 L376.1,1088.0 L421.8,1088.0 L467.6,1088.0 L513.3,1088.0 L559.0,1088.0 L604.7,1088.0 L650.5,1062.0 L696.2,1062.0 L741.9,1036.0 L787.7,984.0 L833.4,984.0 L879.1,984.0 L924.8,932.0 L970.6,932.0 L1016.3,932.0 L1062.0,932.0 L1107.8,880.0 L1153.5,880.0 L1199.2,880.0 L1244.9,880.0 L1290.7,880.0 L1336.4,880.0 L1382.1,880.0 L1427.9,828.0 L1473.6,828.0 L1519.3,828.0 L1565.0,828.0 L1610.8,828.0 L1656.5,828.0 L1702.2,828.0 L1748.0,828.0 L1793.7,828.0 L1839.4,828.0 L1885.2,854.0 L1930.9,854.0 L1976.6,880.0 L2022.3,880.0 L2068.1,906.0 L2113.8,932.0 L2159.5,984.0 L2205.3,1010.0 L2251.0,1036.0 L2296.7,1062.0 L2342.4,1088.0 L2388.2,1114.0 L2433.9,1114.0 L2479.6,1140.0 L2525.4,1140.0 L2571.1,1140.0" fill="none" stroke="#f2cc0c" stroke-width="2.2" stroke-linejoin="round"/><path d="M216.1,1123.8 L238.9,1146.2 L261.8,1142.9 L284.6,1142.9 L307.5,1141.6 L330.4,1148.8 L353.2,1146.8 L376.1,1146.0 L399.0,1143.6 L421.8,1148.1 L444.7,1143.9 L467.6,1136.9 L490.4,1133.8 L513.3,1131.7 L536.2,1129.1 L559.0,1111.1 L581.9,1094.8 L604.7,1094.0 L627.6,1078.9 L650.5,1077.9 L673.3,1062.8 L696.2,1039.9 L719.1,1032.1 L741.9,1017.8 L764.8,1008.4 L787.7,994.1 L810.5,983.5 L833.4,968.1 L856.3,957.2 L879.1,952.0 L902.0,935.6 L924.8,945.3 L947.7,937.2 L970.6,910.7 L993.4,920.0 L1016.3,908.9 L1039.2,908.9 L1062.0,911.2 L1084.9,886.2 L1107.8,886.2 L1130.6,883.1 L1153.5,869.1 L1176.4,874.3 L1199.2,831.1 L1222.1,853.0 L1244.9,857.9 L1267.8,855.0 L1290.7,847.8 L1313.5,876.9 L1336.4,869.1 L1359.3,871.7 L1382.1,897.2 L1405.0,878.7 L1427.9,878.2 L1450.7,864.9 L1473.6,876.1 L1496.5,856.1 L1519.3,879.2 L1542.2,854.0 L1565.0,866.2 L1587.9,867.0 L1610.8,858.9 L1633.6,858.9 L1656.5,849.1 L1679.4,867.0 L1702.2,848.0 L1725.1,868.3 L1748.0,851.1 L1770.8,866.0 L1793.7,866.7 L1816.6,870.1 L1839.4,883.1 L1862.3,873.8 L1885.2,873.0 L1908.0,883.6 L1930.9,890.7 L1953.7,891.7 L1976.6,898.7 L1999.5,908.9 L2022.3,900.5 L2045.2,930.2 L2068.1,940.1 L2090.9,967.9 L2113.8,968.9 L2136.7,984.8 L2159.5,1006.1 L2182.4,1010.0 L2205.3,1045.9 L2228.1,1058.1 L2251.0,1060.2 L2273.8,1077.9 L2296.7,1090.9 L2319.6,1096.1 L2342.4,1104.1 L2365.3,1120.0 L2388.2,1126.5 L2411.0,1131.7 L2433.9,1140.0 L2456.8,1135.8 L2479.6,1141.6 L2502.5,1145.7 L2525.4,1148.6 L2548.2,1157.9 L2571.1,1153.8 L2593.9,1146.2 L2593.9,1192.0 L216.1,1192.0 Z" fill="#8ab8ff" fill-opacity="0.1"/><path d="M216.1,1123.8 L238.9,1146.2 L261.8,1142.9 L284.6,1142.9 L307.5,1141.6 L330.4,1148.8 L353.2,1146.8 L376.1,1146.0 L399.0,1143.6 L421.8,1148.1 L444.7,1143.9 L467.6,1136.9 L490.4,1133.8 L513.3,1131.7 L536.2,1129.1 L559.0,1111.1 L581.9,1094.8 L604.7,1094.0 L627.6,1078.9 L650.5,1077.9 L673.3,1062.8 L696.2,1039.9 L719.1,1032.1 L741.9,1017.8 L764.8,1008.4 L787.7,994.1 L810.5,983.5 L833.4,968.1 L856.3,957.2 L879.1,952.0 L902.0,935.6 L924.8,945.3 L947.7,937.2 L970.6,910.7 L993.4,920.0 L1016.3,908.9 L1039.2,908.9 L1062.0,911.2 L1084.9,886.2 L1107.8,886.2 L1130.6,883.1 L1153.5,869.1 L1176.4,874.3 L1199.2,831.1 L1222.1,853.0 L1244.9,857.9 L1267.8,855.0 L1290.7,847.8 L1313.5,876.9 L1336.4,869.1 L1359.3,871.7 L1382.1,897.2 L1405.0,878.7 L1427.9,878.2 L1450.7,864.9 L1473.6,876.1 L1496.5,856.1 L1519.3,879.2 L1542.2,854.0 L1565.0,866.2 L1587.9,867.0 L1610.8,858.9 L1633.6,858.9 L1656.5,849.1 L1679.4,867.0 L1702.2,848.0 L1725.1,868.3 L1748.0,851.1 L1770.8,866.0 L1793.7,866.7 L1816.6,870.1 L1839.4,883.1 L1862.3,873.8 L1885.2,873.0 L1908.0,883.6 L1930.9,890.7 L1953.7,891.7 L1976.6,898.7 L1999.5,908.9 L2022.3,900.5 L2045.2,930.2 L2068.1,940.1 L2090.9,967.9 L2113.8,968.9 L2136.7,984.8 L2159.5,1006.1 L2182.4,1010.0 L2205.3,1045.9 L2228.1,1058.1 L2251.0,1060.2 L2273.8,1077.9 L2296.7,1090.9 L2319.6,1096.1 L2342.4,1104.1 L2365.3,1120.0 L2388.2,1126.5 L2411.0,1131.7 L2433.9,1140.0 L2456.8,1135.8 L2479.6,1141.6 L2502.5,1145.7 L2525.4,1148.6 L2548.2,1157.9 L2571.1,1153.8 L2593.9,1146.2" fill="none" stroke="#8ab8ff" stroke-width="2.2" stroke-linejoin="round"/></g><g fill="#ccccdc" font-size="24" stroke="#ccccdc" stroke-width="0.6"><text x="198" y="782.0" text-anchor="end">20</text><text x="198" y="847.0" text-anchor="end">18</text><text x="198" y="912.0" text-anchor="end">15</text><text x="198" y="977.0" text-anchor="end">13</text><text x="198" y="1042.0" text-anchor="end">10</text><text x="198" y="1107.0" text-anchor="end">8</text><text x="198" y="1172.0" text-anchor="end">5</text><text x="376.2" y="1227.300" text-anchor="middle" textLength="130.800" lengthAdjust="spacing">12/28 06:00</text><text x="559.1" y="1227.300" text-anchor="middle" textLength="130.800" lengthAdjust="spacing">12/28 08:00</text><text x="742.0" y="1227.300" text-anchor="middle" textLength="130.800" lengthAdjust="spacing">12/28 10:00</text><text x="924.9" y="1227.300" text-anchor="middle" textLength="130.800" lengthAdjust="spacing">12/28 12:00</text><text x="1107.9" y="1227.300" text-anchor="middle" textLength="130.800" lengthAdjust="spacing">12/28 14:00</text><text x="1290.8" y="1227.300" text-anchor="middle" textLength="130.800" lengthAdjust="spacing">12/28 16:00</text><text x="1473.7" y="1227.300" text-anchor="middle" textLength="130.800" lengthAdjust="spacing">12/28 18:00</text><text x="1656.6" y="1227.300" text-anchor="middle" textLength="130.800" lengthAdjust="spacing">12/28 20:00</text><text x="1839.5" y="1227.300" text-anchor="middle" textLength="130.800" lengthAdjust="spacing">12/28 22:00</text><text x="2022.4" y="1227.300" text-anchor="middle" textLength="130.800" lengthAdjust="spacing">12/29 00:00</text><text x="2205.4" y="1227.300" text-anchor="middle" textLength="130.800" lengthAdjust="spacing">12/29 02:00</text><text x="2388.3" y="1227.300" text-anchor="middle" textLength="130.800" lengthAdjust="spacing">12/29 04:00</text><text x="2571.2" y="1227.300" text-anchor="middle" textLength="130.800" lengthAdjust="spacing">12/29 06:00</text></g></svg>
<div class="lsw" style="left:2668px;top:760px;background:#73bf69"></div>
<div class="t " style="left:2711.30px;top:751.68px;font-size:24px;line-height:24px;color:#ccccdc;letter-spacing:0.371px;-webkit-text-stroke:0.55px #ccccdc;">predicted</div>
<div class="lsep" style="left:2652px;top:786px;width:178px"></div>
<div class="lsw" style="left:2668px;top:806px;background:#f2cc0c"></div>
<div class="t " style="left:2711.30px;top:797.68px;font-size:24px;line-height:24px;color:#ccccdc;-webkit-text-stroke:0.55px #ccccdc;">ready</div>
<div class="lsep" style="left:2652px;top:832px;width:178px"></div>
<div class="lsw" style="left:2668px;top:852px;background:#8ab8ff"></div>
<div class="t " style="left:2711.30px;top:843.68px;font-size:24px;line-height:24px;color:#ccccdc;-webkit-text-stroke:0.55px #ccccdc;">ideal</div>
<div class="lsep" style="left:2652px;top:878px;width:178px"></div>
<div class="panel" style="top:1268px;height:300px"></div>
<div class="t " style="left:1459.40px;top:1288.30px;font-size:28px;line-height:28px;color:#ccccdc;transform:scaleX(0.8908);transform-origin:0 0;font-weight:700;">Events</div>
<div class="bar" style="top:1354px"></div>
<svg class="ic" style="left:190px;top:1360px" width="16" height="22" viewBox="0 0 16 22"><path d="M4.800 5.600l5.900 5.600-5.900 5.600" fill="none" stroke="#ccccdc" stroke-width="2.600" stroke-linecap="round" stroke-linejoin="round"/></svg>
<div class="t  mono" style="left:215.50px;top:1360.85px;font-size:25.5px;line-height:25.5px;color:#ccccdc;letter-spacing:-0.620px;-webkit-text-stroke:0.45px #ccccdc;">2021-12-29 05:34:23</div>
<div class="t  mono" style="left:526.00px;top:1360.85px;font-size:25.5px;line-height:25.5px;color:#ccccdc;letter-spacing:-0.620px;-webkit-text-stroke:0.45px #ccccdc;">New size: 6; reason: All metrics below target</div>
<div class="bar" style="top:1394px"></div>
<svg class="ic" style="left:190px;top:1400px" width="16" height="22" viewBox="0 0 16 22"><path d="M4.800 5.600l5.900 5.600-5.900 5.600" fill="none" stroke="#ccccdc" stroke-width="2.600" stroke-linecap="round" stroke-linejoin="round"/></svg>
<div class="t  mono" style="left:215.50px;top:1400.85px;font-size:25.5px;line-height:25.5px;color:#ccccdc;letter-spacing:-0.620px;-webkit-text-stroke:0.45px #ccccdc;">2021-12-29 05:04:23</div>
<div class="t  mono" style="left:526.00px;top:1400.85px;font-size:25.5px;line-height:25.5px;color:#ccccdc;letter-spacing:-0.620px;-webkit-text-stroke:0.45px #ccccdc;">New size: 6; reason: All metrics below target</div>
<div class="bar" style="top:1434px"></div>
<svg class="ic" style="left:190px;top:1440px" width="16" height="22" viewBox="0 0 16 22"><path d="M4.800 5.600l5.900 5.600-5.900 5.600" fill="none" stroke="#ccccdc" stroke-width="2.600" stroke-linecap="round" stroke-linejoin="round"/></svg>
<div class="t  mono" style="left:215.50px;top:1440.85px;font-size:25.5px;line-height:25.5px;color:#ccccdc;letter-spacing:-0.620px;-webkit-text-stroke:0.45px #ccccdc;">2021-12-29 04:51:26</div>
<div class="t  mono" style="left:526.00px;top:1440.85px;font-size:25.5px;line-height:25.5px;color:#ccccdc;letter-spacing:-0.620px;-webkit-text-stroke:0.45px #ccccdc;">New size: 6; reason: All metrics below target</div>
</body></html>
